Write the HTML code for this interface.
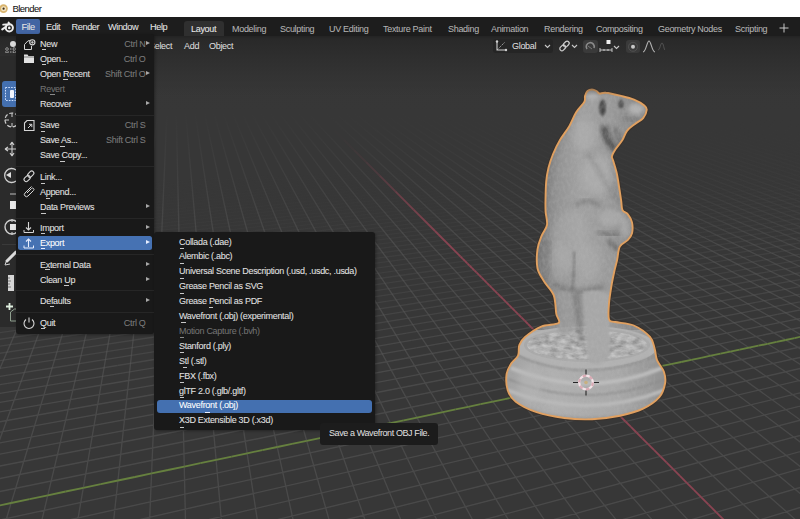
<!DOCTYPE html>
<html><head><meta charset="utf-8"><style>
*{margin:0;padding:0;box-sizing:border-box}
html,body{width:800px;height:519px;overflow:hidden;background:#373737;font-family:"Liberation Sans",sans-serif;position:relative}
.a{position:absolute}
.t{position:absolute;white-space:pre;font-size:9px;letter-spacing:-0.3px;color:#e2e2e2;line-height:14px;height:14px;-webkit-text-stroke:0.06px currentColor}
.menu{position:absolute;background:#191919;border-radius:3px;box-shadow:1px 1px 3px rgba(0,0,0,0.35)}
.sep{position:absolute;height:1px;background:#262626}
.sc{color:#7c7c7c;text-align:right}
.dis{color:#727272}
.arr{position:absolute;width:0;height:0;border-left:4px solid #a8a8a8;border-top:2.5px solid transparent;border-bottom:2.5px solid transparent}
.ul{position:absolute;height:1px;background:#c8c8c8}
svg{position:absolute;left:0;top:0;overflow:visible}
</style></head><body>
<svg width="800" height="519" style="left:0;top:0">
<path d="M15.9 186.4L-85.3 195.1M14.0 189.0L-88.4 197.9M108.1 183.1L-91.6 200.7M164.0 180.5L-94.9 203.5M218.6 178.0L-98.3 206.5M271.9 175.6L-101.7 209.5M823.2 121.7L858.8 130.1M324.0 173.2L4.2 202.5M815.9 122.3L851.3 130.8M374.8 170.8L104.2 195.9M808.6 123.0L882.9 141.0M424.5 168.5L118.7 197.3M769.8 115.9L875.1 141.8M473.1 166.3L170.8 195.0M762.7 116.5L828.4 133.0M520.6 164.1L229.0 192.2M755.4 117.1L820.6 133.7M572.3 161.4L285.7 189.4M720.4 110.6L812.8 134.5M612.5 159.9L341.0 186.6M713.3 111.1L771.1 126.3M680.6 155.4L395.0 184.0M681.4 105.1L763.4 127.0M685.7 157.3L447.6 181.4M674.4 105.6L755.6 127.7M751.2 153.0L504.9 178.2M645.4 100.0L718.2 120.2M813.8 148.9L554.9 175.8M638.5 100.5L710.6 120.8M873.7 145.0L603.7 173.4M631.6 100.9L676.8 113.9M880.2 146.6L640.8 172.1M605.2 95.7L669.3 114.5M886.9 148.3L712.5 167.1M598.4 96.2L638.7 108.2M893.8 150.0L780.7 162.4M574.2 91.3L631.4 108.7M900.7 151.8L787.0 164.4M551.7 86.8L624.0 109.3M545.3 87.2L596.3 103.4M524.6 83.0L589.1 103.9M518.2 83.3L563.8 98.4M499.1 79.4L556.7 98.9M492.9 79.7L533.6 93.8M475.2 76.0L512.3 89.1M458.7 72.5L505.5 89.5M452.8 72.8L485.9 85.1M437.4 69.6L479.3 85.5M423.0 66.5L461.2 81.4M409.4 63.6L444.4 77.6M403.9 63.9L428.6 74.0M391.2 61.1L422.5 74.3M379.3 58.6L407.9 71.0M368.0 56.1L394.2 67.8M357.3 53.8L381.3 64.9M347.1 51.6L369.2 62.1M337.5 49.5L363.6 62.3M332.6 49.7L352.3 59.7M327.7 49.9L341.6 57.2M318.7 47.9L331.5 54.8M313.9 48.1L321.9 52.6M45.3 48.5L41.8 50.7M39.8 48.7L32.2 53.2M34.3 48.8L22.1 55.9M28.8 49.0L16.0 56.1M23.3 49.2L5.0 59.0M17.7 49.4L-6.9 62.1M7.6 51.8L-19.5 65.4M-3.2 54.4L-26.3 65.6M-14.6 57.2L-40.2 69.2M-26.8 60.1L-55.1 73.0M-33.3 60.4L-54.5 69.8M-46.6 63.5L-53.9 66.7" stroke="#595959" stroke-opacity="0.03" stroke-width="1.35" fill="none"/>
<path d="M4.2 202.5L-105.2 212.6M104.2 195.9L-108.9 215.7M118.7 197.3L-112.6 219.0M170.8 195.0L-116.4 222.3M828.4 133.0L867.1 142.6M229.0 192.2L-4.5 214.6M820.6 133.7L859.0 143.5M285.7 189.4L-6.9 217.9M812.8 134.5L850.9 144.3M341.0 186.6L99.8 210.4M771.1 126.3L842.7 145.2M395.0 184.0L123.3 211.1M763.4 127.0L834.4 146.0M447.6 181.4L186.2 207.8M755.6 127.7L826.1 146.9M504.9 178.2L247.4 204.6M718.2 120.2L780.7 137.5M554.9 175.8L307.0 201.5M710.6 120.8L772.5 138.3M603.7 173.4L365.1 198.4M676.8 113.9L764.2 139.1M640.8 172.1L421.6 195.5M669.3 114.5L723.8 130.5M712.5 167.1L476.7 192.6M638.7 108.2L715.7 131.2M780.7 162.4L530.4 189.8M631.4 108.7L679.5 123.4M787.0 164.4L588.7 186.4M624.0 109.3L671.5 124.0M852.5 159.8L639.6 183.7M596.3 103.4L663.5 124.7M859.4 161.7L667.3 183.6M589.1 103.9L631.1 117.5M866.5 163.7L742.3 178.1M563.8 98.4L623.2 118.1M873.7 165.7L813.4 172.8M556.7 98.9L593.9 111.5M881.0 167.8L820.4 175.0M533.6 93.8L586.2 112.0M512.3 89.1L559.6 105.9M505.5 89.5L552.1 106.4M485.9 85.1L527.9 100.8M479.3 85.5L505.7 95.5M461.2 81.4L498.5 96.0M444.4 77.6L478.2 91.1M428.6 74.0L471.2 91.5M422.5 74.3L452.5 87.0M407.9 71.0L435.2 82.8M394.2 67.8L419.0 78.9M381.3 64.9L412.5 79.2M369.2 62.1L397.6 75.6M363.6 62.3L383.7 72.1M352.3 59.7L370.6 68.9M341.6 57.2L358.3 65.9M331.5 54.8L352.4 66.2M321.9 52.6L341.0 63.3M309.1 48.3L330.2 60.6M304.2 48.4L320.1 58.0M299.3 48.6L306.5 53.2M294.4 48.8L297.7 51.0M61.6 48.0L55.3 52.5M56.2 48.2L45.9 55.1M50.8 48.3L36.0 57.9M41.8 50.7L25.4 60.9M32.2 53.2L14.0 64.1M22.1 55.9L7.4 64.4M16.0 56.1L-5.1 67.8M5.0 59.0L-18.5 71.6M-6.9 62.1L-25.7 71.9M-19.5 65.4L-40.5 75.9M-26.3 65.6L-56.5 80.3M-40.2 69.2L-55.8 76.5" stroke="#595959" stroke-opacity="0.06" stroke-width="1.35" fill="none"/>
<path d="M-4.5 214.6L-120.3 225.8M-6.9 217.9L-124.4 229.3M99.8 210.4L-128.5 232.9M842.7 145.2L885.4 156.4M123.3 211.1L-132.8 236.7M834.4 146.0L876.8 157.4M186.2 207.8L-137.1 240.5M826.1 146.9L868.1 158.3M247.4 204.6L-16.8 231.7M780.7 137.5L859.3 159.3M307.0 201.5L95.9 223.4M772.5 138.3L850.5 160.3M365.1 198.4L120.6 224.1M764.2 139.1L800.5 149.5M421.6 195.5L178.7 221.3M723.8 130.5L791.8 150.4M476.7 192.6L243.5 217.8M715.7 131.2L783.0 151.3M530.4 189.8L306.4 214.3M679.5 123.4L738.9 141.5M588.7 186.4L367.6 210.9M671.5 124.0L730.3 142.3M639.6 183.7L427.2 207.6M663.5 124.7L690.9 133.4M667.3 183.6L485.1 204.4M631.1 117.5L682.5 134.2M742.3 178.1L547.9 200.6M623.2 118.1L674.0 134.9M813.4 172.8L602.6 197.6M593.9 111.5L639.0 126.7M820.4 175.0L661.7 193.9M586.2 112.0L630.7 127.4M888.5 169.9L690.8 193.8M559.6 105.9L599.3 119.9M896.2 172.0L768.5 187.7M552.1 106.4L591.2 120.6M904.1 174.2L842.2 182.0M527.9 100.8L562.9 113.7M912.1 176.5L849.8 184.4M505.7 95.5L555.0 114.3M498.5 96.0L529.3 108.0M478.2 91.1L521.6 108.5M471.2 91.5L498.3 102.7M452.5 87.0L476.9 97.3M435.2 82.8L469.6 97.8M419.0 78.9L450.0 92.8M412.5 79.2L432.0 88.2M397.6 75.6L425.0 88.6M383.7 72.1L408.4 84.3M370.6 68.9L393.0 80.3M358.3 65.9L378.6 76.5M352.4 66.2L372.2 76.8M341.0 63.3L358.9 73.3M330.2 60.6L346.4 70.0M320.1 58.0L334.7 66.9M306.5 53.2L323.8 64.0M297.7 51.0L313.4 61.3M289.4 48.9L303.6 58.7M284.4 49.1L294.4 56.3M279.5 49.3L282.4 51.6M80.5 49.4L77.9 51.7M75.0 49.6L69.3 54.3M69.5 49.8L60.2 57.1M64.0 50.0L50.5 60.0M55.3 52.5L40.2 63.2M45.9 55.1L33.7 63.4M36.0 57.9L22.3 66.8M25.4 60.9L10.1 70.4M14.0 64.1L-3.1 74.4M7.4 64.4L-10.5 74.7M-5.1 67.8L-25.1 78.9M-18.5 71.6L-40.9 83.6M-25.7 71.9L-49.0 83.9M-40.5 75.9L-57.2 84.3" stroke="#595959" stroke-opacity="0.08" stroke-width="1.35" fill="none"/>
<path d="M-16.8 231.7L-141.6 244.4M95.9 223.4L-146.3 248.5M120.6 224.1L-151.1 252.7M800.5 149.5L888.3 174.8M178.7 221.3L-25.1 243.0M791.8 150.4L832.5 162.3M243.5 217.8L-28.0 247.1M783.0 151.3L823.3 163.4M306.4 214.3L91.5 237.8M738.9 141.5L814.1 164.4M367.6 210.9L153.1 234.7M730.3 142.3L765.2 153.2M427.2 207.6L213.2 231.7M690.9 133.4L756.1 154.1M485.1 204.4L280.1 227.8M682.5 134.2L747.0 155.1M547.9 200.6L345.0 224.1M674.0 134.9L704.0 144.8M602.6 197.6L408.0 220.4M639.0 126.7L695.0 145.7M661.7 193.9L469.3 216.9M630.7 127.4L656.8 136.4M690.8 193.8L535.6 212.6M599.3 119.9L648.1 137.2M768.5 187.7L593.3 209.3M591.2 120.6L639.3 138.0M842.2 182.0L655.6 205.3M562.9 113.7L605.4 129.5M849.8 184.4L709.9 202.1M555.0 114.3L596.8 130.2M857.6 186.9L789.9 195.6M529.3 108.0L566.5 122.5M865.5 189.4L797.4 198.3M521.6 108.5L558.1 123.1M498.3 102.7L530.8 116.1M476.9 97.3L506.0 109.6M469.6 97.8L498.0 110.1M450.0 92.8L475.5 104.2M432.0 88.2L467.8 104.7M425.0 88.6L447.3 99.2M408.4 84.3L428.5 94.1M393.0 80.3L421.2 94.5M378.6 76.5L403.9 89.8M372.2 76.8L387.9 85.4M358.9 73.3L373.1 81.3M346.4 70.0L359.2 77.5M334.7 66.9L352.7 77.8M323.8 64.0L339.9 74.2M313.4 61.3L328.0 70.9M303.6 58.7L316.8 67.7M294.4 56.3L306.2 64.8M282.4 51.6L296.3 62.0M274.5 49.5L286.9 59.4M269.4 49.7L275.0 54.3M264.4 49.8L266.9 52.1M257.0 47.8L259.3 50.0M96.7 48.9L94.6 51.1M91.3 49.1L86.6 53.7M85.9 49.3L78.1 56.4M77.9 51.7L69.1 59.3M69.3 54.3L59.5 62.4M60.2 57.1L49.1 65.7M50.5 60.0L38.0 69.3M40.2 63.2L31.1 69.6M33.7 63.4L18.8 73.5M22.3 66.8L5.6 77.6M10.1 70.4L-8.7 82.1M-3.1 74.4L-16.7 82.5M-10.5 74.7L-32.6 87.4M-25.1 78.9L-41.1 87.8M-40.9 83.6L-58.9 93.2M-49.0 83.9L-58.0 88.6" stroke="#595959" stroke-opacity="0.11" stroke-width="1.35" fill="none"/>
<path d="M-25.1 243.0L-156.0 257.0M832.5 162.3L878.9 176.0M-28.0 247.1L-161.1 261.4M823.3 163.4L869.3 177.1M91.5 237.8L-166.3 266.0M814.1 164.4L859.7 178.3M153.1 234.7L-34.0 255.5M765.2 153.2L849.9 179.5M213.2 231.7L-37.2 259.9M756.1 154.1L795.3 166.5M280.1 227.8L87.9 249.8M747.0 155.1L785.7 167.6M345.0 224.1L143.0 247.5M704.0 144.8L776.1 168.7M408.0 220.4L214.9 243.1M695.0 145.7L728.4 157.0M469.3 216.9L284.6 238.9M656.8 136.4L719.0 157.9M535.6 212.6L352.2 234.8M648.1 137.2L676.9 147.4M593.3 209.3L417.8 230.8M639.3 138.0L667.7 148.3M655.6 205.3L481.4 227.0M605.4 129.5L658.4 149.2M709.9 202.1L543.2 223.3M596.8 130.2L621.4 139.6M789.9 195.6L609.9 218.8M566.5 122.5L612.3 140.4M797.4 198.3L668.0 215.3M558.1 123.1L579.4 131.7M873.7 192.0L730.5 211.1M530.8 116.1L570.6 132.4M882.0 194.6L812.9 204.0M506.0 109.6L541.1 124.5M890.6 197.4L820.9 207.0M498.0 110.1L532.6 125.1M475.5 104.2L506.1 117.9M467.8 104.7L482.0 111.2M447.3 99.2L474.0 111.8M428.5 94.1L452.2 105.7M421.2 94.5L444.3 106.2M403.9 89.8L424.6 100.6M387.9 85.4L406.4 95.4M373.1 81.3L389.6 90.6M359.2 77.5L382.4 91.0M352.7 77.8L367.1 86.5M339.9 74.2L352.8 82.3M328.0 70.9L339.5 78.5M316.8 67.7L327.1 74.8M306.2 64.8L315.5 71.4M296.3 62.0L304.6 68.3M286.9 59.4L294.4 65.3M275.0 54.3L284.7 62.5M266.9 52.1L275.7 59.8M259.3 50.0L267.1 57.3M247.0 48.2L251.2 52.7M112.7 48.4L111.1 50.6M107.4 48.6L103.7 53.1M102.1 48.7L95.8 55.8M94.6 51.1L87.4 58.7M86.6 53.7L78.5 61.7M78.1 56.4L68.9 65.0M69.1 59.3L58.6 68.5M59.5 62.4L51.8 68.8M49.1 65.7L40.4 72.6M38.0 69.3L28.1 76.7M31.1 69.6L14.9 81.1M18.8 73.5L0.5 85.9M5.6 77.6L-7.7 86.3M-8.7 82.1L-23.9 91.6M-16.7 82.5L-32.5 92.0M-32.6 87.4L-50.7 97.8M-41.1 87.8L-50.1 92.8" stroke="#595959" stroke-opacity="0.14" stroke-width="1.35" fill="none"/>
<path d="M-34.0 255.5L-171.7 270.8M849.9 179.5L902.1 195.8M-37.2 259.9L-177.3 275.6M795.3 166.5L840.1 180.8M87.9 249.8L-183.1 280.7M785.7 167.6L830.1 182.0M143.0 247.5L-43.9 269.1M776.1 168.7L820.0 183.3M214.9 243.1L85.3 258.3M728.4 157.0L766.3 169.8M284.6 238.9L93.8 261.6M719.0 157.9L756.4 170.9M352.2 234.8L170.2 256.8M676.9 147.4L746.5 172.0M417.8 230.8L235.0 253.3M667.7 148.3L699.8 159.9M481.4 227.0L306.9 248.8M658.4 149.2L690.1 160.9M543.2 223.3L376.6 244.4M621.4 139.6L649.0 150.1M609.9 218.8L444.1 240.1M612.3 140.4L639.5 151.0M668.0 215.3L517.0 235.0M579.4 131.7L630.0 151.9M730.5 211.1L580.2 231.1M570.6 132.4L594.0 142.0M812.9 204.0L648.2 226.3M541.1 124.5L584.7 142.8M820.9 207.0L707.5 222.6M532.6 125.1L552.7 133.9M899.3 200.1L752.7 220.7M506.1 117.9L543.6 134.6M908.3 203.0L837.6 213.1M482.0 111.2L515.1 126.5M474.0 111.8L489.3 119.1M452.2 105.7L480.8 119.7M444.3 106.2L457.6 112.9M424.6 100.6L449.3 113.5M406.4 95.4L428.3 107.2M389.6 90.6L409.1 101.5M382.4 91.0L401.3 102.0M367.1 86.5L383.9 96.7M352.8 82.3L367.8 91.8M339.5 78.5L352.9 87.3M327.1 74.8L339.1 83.0M315.5 71.4L332.1 83.4M304.6 68.3L319.4 79.5M294.4 65.3L307.6 75.8M284.7 62.5L296.5 72.3M275.7 59.8L286.1 69.1M267.1 57.3L276.4 66.1M251.2 52.7L256.0 57.7M242.0 48.4L248.1 55.3M237.0 48.5L240.6 53.1M231.9 48.7L233.6 50.9M123.3 48.0L120.5 52.5M118.0 48.2L113.2 55.2M111.1 50.6L105.4 58.0M103.7 53.1L99.5 58.2M95.8 55.8L90.9 61.2M87.4 58.7L81.9 64.5M78.5 61.7L72.1 68.0M68.9 65.0L61.6 71.7M58.6 68.5L50.3 75.7M51.8 68.8L38.0 80.1M40.4 72.6L30.4 80.4M28.1 76.7L16.7 85.2M14.9 81.1L1.8 90.3M0.5 85.9L-6.7 90.7M-7.7 86.3L-23.4 96.4M-23.9 91.6L-41.8 102.7M-32.5 92.0L-51.3 103.2" stroke="#595959" stroke-opacity="0.17" stroke-width="1.35" fill="none"/>
<path d="M840.1 180.8L891.8 197.2M830.1 182.0L881.4 198.6M-43.9 269.1L-189.0 285.9M820.0 183.3L870.8 200.1M85.3 258.3L-195.2 291.3M766.3 169.8L809.8 184.5M93.8 261.6L-51.0 278.9M756.4 170.9L799.4 185.8M170.2 256.8L-54.7 284.1M746.5 172.0L789.0 187.1M235.0 253.3L81.1 272.2M699.8 159.9L736.4 173.2M306.9 248.8L140.7 269.5M690.1 160.9L726.2 174.3M376.6 244.4L208.7 265.7M649.0 150.1L715.8 175.5M444.1 240.1L284.2 260.8M639.5 151.0L670.3 163.0M517.0 235.0L357.1 256.0M630.0 151.9L660.2 164.0M580.2 231.1L427.8 251.4M594.0 142.0L620.3 152.8M648.2 226.3L496.2 246.9M584.7 142.8L610.5 153.7M707.5 222.6L569.9 241.6M552.7 133.9L575.3 143.7M752.7 220.7L633.7 237.4M543.6 134.6L565.8 144.5M837.6 213.1L702.4 232.4M515.1 126.5L534.5 135.4M917.5 205.9L768.5 227.6M489.3 119.1L525.3 136.1M480.8 119.7L497.4 127.8M457.6 112.9L488.4 128.5M449.3 113.5L463.6 121.0M428.3 107.2L454.8 121.6M409.1 101.5L432.5 114.6M401.3 102.0L412.1 108.3M383.9 96.7L404.0 108.8M367.8 91.8L385.6 103.0M352.9 87.3L368.6 97.6M339.1 83.0L353.0 92.6M332.1 83.4L338.6 88.0M319.4 79.5L331.3 88.4M307.6 75.8L318.1 84.1M296.5 72.3L305.8 80.1M286.1 69.1L294.4 76.4M276.4 66.1L283.7 72.9M256.0 57.7L264.2 66.6M248.1 55.3L255.3 63.7M240.6 53.1L247.0 61.0M233.6 50.9L237.1 55.8M226.9 48.9L229.9 53.5M221.8 49.1L223.1 51.3M132.7 49.9L131.5 52.2M128.5 47.9L124.6 54.8M120.5 52.5L117.3 57.6M113.2 55.2L109.5 60.6M105.4 58.0L101.1 63.7M99.5 58.2L92.1 67.2M90.9 61.2L82.4 70.8M81.9 64.5L72.0 74.8M72.1 68.0L64.8 75.1M61.6 71.7L53.2 79.4M50.3 75.7L40.7 84.1M38.0 80.1L27.0 89.1M30.4 80.4L18.7 89.5M16.7 85.2L3.3 95.1M1.8 90.3L-13.6 101.2M-6.7 90.7L-22.9 101.7M-23.4 96.4L-42.0 108.5M-41.8 102.7L-52.0 109.1" stroke="#595959" stroke-opacity="0.19" stroke-width="1.35" fill="none"/>
<path d="M809.8 184.5L860.1 201.6M799.4 185.8L849.3 203.1M789.0 187.1L838.3 204.6M81.1 272.2L-58.6 289.4M736.4 173.2L778.4 188.4M140.7 269.5L-62.5 294.9M726.2 174.3L767.7 189.7M208.7 265.7L78.1 282.3M715.8 175.5L756.8 191.1M284.2 260.8L118.9 282.1M670.3 163.0L705.4 176.7M357.1 256.0L200.0 276.6M660.2 164.0L694.8 177.9M427.8 251.4L278.3 271.3M620.3 152.8L650.1 165.1M496.2 246.9L354.0 266.2M610.5 153.7L639.8 166.1M569.9 241.6L427.1 261.2M575.3 143.7L600.6 154.7M633.7 237.4L497.9 256.4M565.8 144.5L590.7 155.6M702.4 232.4L566.4 251.8M534.5 135.4L580.6 156.6M768.5 227.6L639.9 246.3M525.3 136.1L546.5 146.2M855.2 219.6L710.7 240.9M497.4 127.8L536.7 147.1M864.3 222.9L778.8 235.8M488.4 128.5L506.5 137.7M463.6 121.0L479.4 129.2M454.8 121.6L470.3 129.9M432.5 114.6L446.0 122.2M412.1 108.3L437.2 122.9M404.0 108.8L415.5 115.8M385.6 103.0L395.7 109.4M368.6 97.6L387.4 109.9M353.0 92.6L369.5 104.0M338.6 88.0L353.1 98.5M331.3 88.4L338.0 93.5M318.1 84.1L324.0 88.8M305.8 80.1L316.7 89.2M294.4 76.4L304.0 84.9M283.7 72.9L292.1 80.8M264.2 66.6L270.7 73.5M255.3 63.7L261.0 70.2M247.0 61.0L251.9 67.1M237.1 55.8L243.4 64.2M229.9 53.5L235.3 61.4M223.1 51.3L227.7 58.8M216.6 49.2L220.5 56.4M211.5 49.4L213.7 54.1M206.3 49.6L207.3 51.9M153.9 49.2L153.4 51.4M148.7 49.3L148.0 51.6M143.4 49.5L141.6 54.2M138.0 49.7L134.9 56.9M131.5 52.2L127.7 59.9M124.6 54.8L121.7 60.1M117.3 57.6L113.7 63.2M109.5 60.6L105.2 66.6M101.1 63.7L96.1 70.3M92.1 67.2L86.3 74.2M82.4 70.8L75.7 78.4M72.0 74.8L68.2 78.7M64.8 75.1L56.4 83.3M53.2 79.4L43.5 88.4M40.7 84.1L29.4 93.8M27.0 89.1L20.8 94.3M18.7 89.5L4.9 100.3M3.3 95.1L-12.6 107.0M-13.6 101.2L-22.3 107.5M-22.9 101.7L-42.3 114.9M-42.0 108.5L-52.7 115.5" stroke="#595959" stroke-opacity="0.22" stroke-width="1.35" fill="none"/>
<path d="M849.3 203.1L853.5 204.5M838.3 204.6L851.0 209.0M778.4 188.4L835.5 209.1M767.7 189.7L815.9 207.6M78.1 282.3L-66.7 300.6M118.9 282.1L-70.9 306.5M705.4 176.7L745.8 192.4M200.0 276.6L74.8 293.0M694.8 177.9L734.7 193.8M278.3 271.3L127.8 291.3M650.1 165.1L684.2 179.1M354.0 266.2L200.9 286.9M639.8 166.1L673.4 180.3M427.1 261.2L281.8 281.2M600.6 154.7L629.5 167.2M497.9 256.4L359.9 275.8M590.7 155.6L619.0 168.3M566.4 251.8L435.2 270.5M580.6 156.6L608.4 169.4M639.9 246.3L508.1 265.4M546.5 146.2L570.4 157.6M710.7 240.9L586.3 259.3M536.7 147.1L560.1 158.5M778.8 235.8L654.0 254.6M506.5 137.7L526.8 147.9M873.7 226.4L726.6 249.0M479.4 129.2L516.9 148.8M883.4 229.9L796.3 243.5M470.3 129.9L487.5 139.3M446.0 122.2L461.0 130.7M437.2 122.9L451.8 131.4M415.5 115.8L428.2 123.5M395.7 109.4L419.2 124.2M387.4 109.9L398.2 117.0M369.5 104.0L379.0 110.5M353.1 98.5L361.4 104.5M338.0 93.5L353.3 105.0M324.0 88.8L337.4 99.4M316.7 89.2L322.8 94.3M304.0 84.9L309.3 89.6M292.1 80.8L296.8 85.2M270.7 73.5L278.2 81.5M261.0 70.2L267.5 77.7M251.9 67.1L257.6 74.1M243.4 64.2L248.2 70.8M235.3 61.4L239.5 67.6M227.7 58.8L231.3 64.7M220.5 56.4L223.5 61.9M213.7 54.1L216.2 59.3M207.3 51.9L209.3 56.8M201.1 49.8L202.8 54.5M195.9 49.9L197.3 54.7M190.2 47.9L191.2 52.4M185.1 48.1L185.8 52.6M180.0 48.3L180.4 52.8M174.8 48.5L174.9 53.0M169.6 48.6L169.4 53.2M164.4 48.8L163.9 53.4M159.2 49.0L158.4 53.6M153.4 51.4L152.2 56.3M148.0 51.6L146.5 56.5M141.6 54.2L139.7 59.4M134.9 56.9L132.5 62.5M127.7 59.9L124.7 65.8M121.7 60.1L118.3 66.1M113.7 63.2L109.7 69.7M105.2 66.6L100.4 73.6M96.1 70.3L90.4 77.7M86.3 74.2L79.6 82.3M75.7 78.4L71.9 82.6M68.2 78.7L59.8 87.6M56.4 83.3L46.6 93.0M43.5 88.4L38.0 93.4M29.4 93.8L23.1 99.4M20.8 94.3L6.6 105.9M4.9 100.3L-3.0 106.4M-12.6 107.0L-21.8 113.7M-22.3 107.5L-32.0 114.3M-42.3 114.9L-53.6 122.5" stroke="#595959" stroke-opacity="0.25" stroke-width="1.35" fill="none"/>
<path d="M835.5 209.1L852.7 215.3M815.9 207.6L845.6 218.7M756.8 191.1L812.6 212.3M745.8 192.4L792.9 210.8M74.8 293.0L-75.4 312.6M127.8 291.3L-79.9 319.0M684.2 179.1L723.5 195.2M200.9 286.9L71.3 304.4M673.4 180.3L712.1 196.6M281.8 281.2L137.3 301.2M629.5 167.2L662.4 181.5M359.9 275.8L222.9 295.0M619.0 168.3L651.4 182.8M435.2 270.5L305.4 289.0M508.1 265.4L384.9 283.3M570.4 157.6L597.6 170.5M586.3 259.3L461.7 277.8M560.1 158.5L586.8 171.6M654.0 254.6L535.8 272.5M526.8 147.9L549.7 159.5M726.6 249.0L615.3 266.1M516.9 148.8L539.2 160.5M796.3 243.5L691.5 260.0M487.5 139.3L506.8 149.7M893.3 233.5L757.6 255.2M461.0 130.7L477.8 140.1M903.5 237.3L821.6 250.6M451.8 131.4L468.0 140.9M428.2 123.5L442.4 132.1M419.2 124.2L432.9 132.8M398.2 117.0L410.1 124.9M379.0 110.5L389.4 117.6M361.4 104.5L380.6 118.2M353.3 105.0L362.0 111.6M337.4 99.4L345.1 105.5M322.8 94.3L329.5 99.9M309.3 89.6L321.5 100.4M296.8 85.2L307.4 95.2M278.2 81.5L282.4 86.0M267.5 77.7L271.1 81.8M257.6 74.1L260.7 78.0M248.2 70.8L250.9 74.4M239.5 67.6L241.8 71.0M231.3 64.7L235.3 71.3M223.5 61.9L226.9 68.2M216.2 59.3L219.0 65.2M209.3 56.8L211.6 62.4M202.8 54.5L204.6 59.7M197.3 54.7L198.8 60.0M191.2 52.4L192.3 57.4M185.8 52.6L186.6 57.7M180.4 52.8L180.8 57.9M174.9 53.0L175.0 58.1M169.4 53.2L169.2 58.3M163.9 53.4L163.4 58.5M158.4 53.6L157.5 58.7M152.2 56.3L150.9 61.8M146.5 56.5L144.8 62.0M139.7 59.4L137.5 65.3M132.5 62.5L129.7 68.9M124.7 65.8L123.1 69.1M118.3 66.1L114.4 73.0M109.7 69.7L105.0 77.1M100.4 73.6L94.9 81.6M90.4 77.7L87.3 81.9M79.6 82.3L75.9 86.8M71.9 82.6L63.5 92.1M59.8 87.6L49.9 98.0M46.6 93.0L41.0 98.4M38.0 93.4L25.6 104.9M23.1 99.4L16.1 105.4M6.6 105.9L-1.5 112.6M-3.0 106.4L-21.1 120.6M-21.8 113.7L-31.8 121.2M-32.0 114.3L-54.5 130.2" stroke="#595959" stroke-opacity="0.28" stroke-width="1.35" fill="none"/>
<path d="M845.6 218.7L850.0 220.3M812.6 212.3L851.9 227.2M792.9 210.8L821.9 222.1M734.7 193.8L789.1 215.6M723.5 195.2L769.3 214.1M71.3 304.4L-84.7 325.6M137.3 301.2L69.5 310.5M662.4 181.5L700.5 198.1M222.9 295.0L91.0 313.5M651.4 182.8L688.9 199.5M305.4 289.0L169.6 308.4M608.4 169.4L640.2 184.0M384.9 283.3L256.5 302.0M597.6 170.5L628.9 185.3M461.7 277.8L340.1 295.8M535.8 272.5L420.7 289.8M549.7 159.5L575.8 172.7M615.3 266.1L498.3 284.1M691.5 260.0L581.6 277.2M506.8 149.7L528.6 161.5M757.6 255.2L653.5 271.9M477.8 140.1L496.6 150.6M821.6 250.6L730.4 265.5M468.0 140.9L486.3 151.5M914.0 241.1L804.1 259.4M442.4 132.1L458.2 141.7M924.8 245.1L841.5 259.3M432.9 132.8L448.2 142.5M410.1 124.9L423.4 133.6M389.4 117.6L400.9 125.5M380.6 118.2L391.7 126.2M362.0 111.6L371.7 118.8M345.1 105.5L353.4 112.1M329.5 99.9L344.8 112.7M321.5 100.4L328.4 106.5M307.4 95.2L313.4 100.9M282.4 86.0L286.9 90.8M271.1 81.8L279.3 91.2M260.7 78.0L267.7 86.7M250.9 74.4L257.0 82.5M241.8 71.0L246.9 78.7M235.3 71.3L237.6 75.0M226.9 68.2L228.8 71.6M219.0 65.2L222.3 71.9M211.6 62.4L214.2 68.7M204.6 59.7L206.7 65.7M198.8 60.0L200.5 66.0M192.3 57.4L193.5 63.1M186.6 57.7L187.4 63.3M180.8 57.9L181.3 63.6M175.0 58.1L175.2 63.8M169.2 58.3L169.0 64.1M163.4 58.5L162.7 64.3M157.5 58.7L156.5 64.6M150.9 61.8L149.4 68.1M144.8 62.0L142.9 68.3M137.5 65.3L135.0 72.1M129.7 68.9L128.2 72.4M123.1 69.1L119.4 76.5M114.4 73.0L109.9 80.9M105.0 77.1L102.4 81.2M94.9 81.6L91.8 86.1M87.3 81.9L80.1 91.3M75.9 86.8L67.4 97.1M63.5 92.1L58.7 97.5M49.9 98.0L44.2 103.9M41.0 98.4L34.9 104.4M25.6 104.9L18.4 111.5M16.1 105.4L0.1 119.3M-1.5 112.6L-10.5 120.0M-21.1 120.6L-31.7 128.8M-31.8 121.2L-43.0 129.5" stroke="#595959" stroke-opacity="0.30" stroke-width="1.35" fill="none"/>
<path d="M821.9 222.1L853.8 234.5M789.1 215.6L823.0 229.1M769.3 214.1L793.4 224.0M712.1 196.6L761.1 217.3M69.5 310.5L-89.7 332.4M700.5 198.1L745.1 217.4M91.0 313.5L-94.8 339.5M169.6 308.4L65.6 323.3M640.2 184.0L677.0 201.0M256.5 302.0L135.3 319.6M628.9 185.3L665.1 202.5M340.1 295.8L214.6 314.4M586.8 171.6L617.4 186.6M420.7 289.8L302.1 307.7M575.8 172.7L605.8 187.9M498.3 284.1L386.2 301.3M539.2 160.5L564.8 173.9M581.6 277.2L467.2 295.1M528.6 161.5L553.5 175.0M653.5 271.9L545.3 289.2M496.6 150.6L517.9 162.6M730.4 265.5L628.9 282.1M486.3 151.5L507.1 163.6M804.1 259.4L708.8 275.3M458.2 141.7L476.0 152.4M841.5 259.3L778.1 270.1M448.2 142.5L465.5 153.4M423.4 133.6L438.2 143.3M400.9 125.5L413.7 134.3M391.7 126.2L404.0 135.1M371.7 118.8L382.3 126.9M353.4 112.1L362.7 119.5M344.8 112.7L353.6 120.1M328.4 106.5L336.1 113.3M313.4 100.9L320.0 107.0M286.9 90.8L297.2 101.8M279.3 91.2L283.9 96.5M267.7 86.7L271.7 91.6M257.0 82.5L260.3 87.1M246.9 78.7L249.8 82.9M237.6 75.0L242.6 83.3M228.8 71.6L233.0 79.3M222.3 71.9L224.1 75.6M214.2 68.7L215.7 72.2M206.7 65.7L209.1 72.5M200.5 66.0L201.4 69.3M193.5 63.1L194.9 69.5M187.4 63.3L188.4 69.8M181.3 63.6L181.6 66.7M175.2 63.8L175.2 67.0M169.0 64.1L168.8 67.3M162.7 64.3L162.0 70.9M156.5 64.6L155.3 71.2M149.4 68.1L148.6 71.5M142.9 68.3L140.7 75.5M135.0 72.1L133.7 75.8M128.2 72.4L124.8 80.2M119.4 76.5L117.4 80.5M109.9 80.9L107.4 85.3M102.4 81.2L96.6 90.5M91.8 86.1L88.4 90.9M80.1 91.3L76.1 96.6M67.4 97.1L62.6 102.9M58.7 97.5L53.5 103.4M44.2 103.9L38.0 110.4M34.9 104.4L20.9 118.1M18.4 111.5L10.6 118.7M0.1 119.3L-9.2 127.4M-10.5 120.0L-20.4 128.1M-31.7 128.8L-43.4 138.0M-43.0 129.5L-55.5 138.8" stroke="#595959" stroke-opacity="0.33" stroke-width="1.35" fill="none"/>
<path d="M823.0 229.1L850.9 240.3M793.4 224.0L824.1 236.6M761.1 217.3L793.7 231.1M745.1 217.4L760.5 224.1M688.9 199.5L732.7 219.1M65.6 323.3L-100.1 346.9M677.0 201.0L720.2 220.8M135.3 319.6L63.6 330.0M214.6 314.4L98.6 331.5M617.4 186.6L652.9 204.0M302.1 307.7L181.1 325.9M386.2 301.3L272.1 318.8M564.8 173.9L594.1 189.2M467.2 295.1L359.6 312.0M545.3 289.2L443.7 305.4M517.9 162.6L542.2 176.2M628.9 282.1L524.6 299.1M708.8 275.3L611.2 291.6M476.0 152.4L496.1 164.6M778.1 270.1L685.8 285.8M851.9 263.8L765.4 278.8M438.2 143.3L454.9 154.3M855.7 269.7L841.6 272.2M413.7 134.3L428.1 144.2M404.0 135.1L417.8 145.0M382.3 126.9L394.2 135.8M362.7 119.5L372.9 127.6M353.6 120.1L363.4 128.3M336.1 113.3L344.5 120.7M320.0 107.0L327.3 113.8M297.2 101.8L303.0 108.1M283.9 96.5L288.9 102.3M271.7 91.6L276.0 97.0M260.3 87.1L264.0 92.0M249.8 82.9L256.2 92.5M242.6 83.3L245.4 87.9M233.0 79.3L235.3 83.6M224.1 75.6L226.0 79.7M215.7 72.2L218.9 80.0M209.1 72.5L210.4 76.3M201.4 69.3L203.5 76.6M194.9 69.5L195.7 73.1M188.4 69.8L189.0 73.4M181.6 66.7L182.2 73.7M175.2 67.0L175.4 74.0M168.8 67.3L168.5 74.3M162.0 70.9L161.6 74.6M155.3 71.2L154.7 74.9M148.6 71.5L146.8 79.2M140.7 75.5L139.5 79.5M133.7 75.8L130.6 84.2M124.8 80.2L122.9 84.6M117.4 80.5L112.8 89.7M107.4 85.3L104.7 90.1M96.6 90.5L93.3 95.7M88.4 90.9L80.8 101.9M76.1 96.6L71.7 102.4M62.6 102.9L57.4 109.3M53.5 103.4L47.7 109.8M38.0 110.4L31.2 117.5M20.9 118.1L12.8 126.1M10.6 118.7L1.8 126.8M-9.2 127.4L-19.6 136.5M-20.4 128.1L-31.5 137.2M-43.4 138.0L-56.6 148.3" stroke="#595959" stroke-opacity="0.36" stroke-width="1.35" fill="none"/>
<path d="M824.1 236.6L852.9 248.4M793.7 231.1L825.3 244.4M760.5 224.1L789.6 236.7M732.7 219.1L759.8 231.2M720.2 220.8L727.6 224.2M63.6 330.0L-105.7 354.6M665.1 202.5L707.5 222.6M98.6 331.5L-111.5 362.6M181.1 325.9L72.0 342.4M605.8 187.9L640.6 205.5M272.1 318.8L157.4 336.5M594.1 189.2L628.2 207.0M359.6 312.0L251.5 328.9M553.5 175.0L582.2 190.6M443.7 305.4L341.9 321.7M542.2 176.2L570.2 191.9M524.6 299.1L428.6 314.8M507.1 163.6L530.7 177.4M611.2 291.6L512.1 308.1M496.1 164.6L519.1 178.6M685.8 285.8L592.4 301.7M465.5 153.4L485.0 165.7M765.4 278.8L678.0 294.0M454.9 154.3L473.9 166.8M841.6 272.2L759.8 286.7M428.1 144.2L444.2 155.3M852.5 277.1L838.1 279.7M417.8 145.0L433.4 156.2M394.2 135.8L407.5 145.9M372.9 127.6L384.3 136.6M363.4 128.3L374.3 137.4M344.5 120.7L353.8 129.0M327.3 113.8L335.3 121.3M303.0 108.1L309.5 115.0M288.9 102.3L294.4 108.6M276.0 97.0L280.6 102.8M264.0 92.0L272.3 103.3M256.2 92.5L259.9 97.9M245.4 87.9L248.5 92.9M235.3 83.6L237.9 88.3M226.0 79.7L230.3 88.7M218.9 80.0L220.7 84.3M210.4 76.3L213.3 84.7M203.5 76.6L204.6 80.7M195.7 73.1L197.4 81.0M189.0 73.4L189.6 77.2M182.2 73.7L182.5 77.5M175.4 74.0L175.5 77.9M168.5 74.3L168.4 78.2M161.6 74.6L161.2 78.5M154.7 74.9L153.3 83.1M146.8 79.2L145.8 83.5M139.5 79.5L138.2 83.8M130.6 84.2L128.8 88.9M122.9 84.6L120.9 89.3M112.8 89.7L110.3 94.9M104.7 90.1L98.6 101.0M93.3 95.7L89.7 101.4M80.8 101.9L76.4 108.2M71.7 102.4L66.9 108.7M57.4 109.3L51.6 116.3M47.7 109.8L41.4 116.9M31.2 117.5L23.7 125.4M1.8 126.8L-7.9 135.7M-31.5 137.2L-43.9 147.4" stroke="#595959" stroke-opacity="0.39" stroke-width="1.35" fill="none"/>
<path d="M825.3 244.4L855.0 257.0M789.6 236.7L821.6 250.6M759.8 231.2L785.3 242.6M727.6 224.2L755.0 236.9M707.5 222.6L722.2 229.6M652.9 204.0L694.6 224.4M72.0 342.4L-117.5 371.0M640.6 205.5L681.5 226.2M157.4 336.5L56.9 351.9M251.5 328.9L144.7 345.7M582.2 190.6L615.5 208.6M341.9 321.7L229.7 339.6M428.6 314.8L323.1 332.0M530.7 177.4L558.0 193.3M512.1 308.1L412.8 324.6M592.4 301.7L498.9 317.6M485.0 165.7L507.4 179.8M678.0 294.0L590.8 309.2M759.8 286.7L669.8 302.7M444.2 155.3L462.5 167.9M838.1 279.7L753.9 295.0M856.5 283.6L834.3 287.7M407.5 145.9L422.5 157.2M384.3 136.6L397.0 146.7M353.8 129.0L364.2 138.2M335.3 121.3L344.1 129.7M309.5 115.0L316.6 122.6M294.4 108.6L300.5 115.6M280.6 102.8L285.8 109.2M272.3 103.3L277.0 109.7M259.9 97.9L263.9 103.8M248.5 92.9L251.8 98.3M237.9 88.3L243.6 98.8M230.3 88.7L232.7 93.7M220.7 84.3L222.7 89.1M213.3 84.7L215.0 89.5M204.6 80.7L205.9 85.1M197.4 81.0L198.4 85.5M189.6 77.2L190.9 85.8M182.5 77.5L182.9 81.7M175.5 77.9L175.6 82.1M168.4 78.2L168.2 82.4M161.2 78.5L160.3 87.3M153.3 83.1L152.5 87.7M145.8 83.5L144.7 88.1M138.2 83.8L135.2 93.6M128.8 88.9L127.0 94.0M120.9 89.3L118.6 94.4M110.3 94.9L107.4 100.5M98.6 101.0L95.1 107.2M89.7 101.4L85.8 107.7M76.4 108.2L71.6 115.1M66.9 108.7L61.6 115.7M51.6 116.3L45.2 124.1M41.4 116.9L34.5 124.7M23.7 125.4L15.3 134.2M12.8 126.1L3.8 134.9M-7.9 135.7L-18.7 145.7M-19.6 136.5L-31.2 146.6M-43.9 147.4L-57.9 159.0" stroke="#595959" stroke-opacity="0.41" stroke-width="1.35" fill="none"/>
<path d="M821.6 250.6L851.9 263.8M785.3 242.6L813.0 255.0M755.0 236.9L780.8 248.7M722.2 229.6L745.8 240.8M694.6 224.4L716.6 235.1M681.5 226.2L685.0 227.9M56.9 351.9L-123.8 379.7M628.2 207.0L668.2 228.0M144.7 345.7L54.6 359.8M229.7 339.6L131.4 355.3M570.2 191.9L602.8 210.2M323.1 332.0L218.8 349.0M412.8 324.6L314.7 340.9M519.1 178.6L545.7 194.7M498.9 317.6L406.7 333.2M590.8 309.2L495.0 325.8M473.9 166.8L495.5 181.0M669.8 302.7L589.1 317.1M753.9 295.0L669.9 310.3M433.4 156.2L451.1 168.9M834.3 287.7L756.0 302.3M853.1 291.7L838.0 294.6M397.0 146.7L411.5 158.2M374.3 137.4L386.5 147.6M364.2 138.2L375.9 148.5M344.1 129.7L354.0 138.9M316.6 122.6L324.5 131.1M300.5 115.6L307.2 123.3M285.8 109.2L291.4 116.2M277.0 109.7L282.3 116.8M263.9 103.8L268.2 110.3M251.8 98.3L255.4 104.3M243.6 98.8L246.9 104.8M232.7 93.7L235.4 99.3M222.7 89.1L224.8 94.2M215.0 89.5L216.8 94.6M205.9 85.1L207.2 89.8M198.4 85.5L199.5 90.3M190.9 85.8L191.6 90.7M182.9 81.7L183.7 91.1M175.6 82.1L175.7 86.6M168.2 82.4L167.8 91.9M160.3 87.3L159.7 92.3M152.5 87.7L151.6 92.7M144.7 88.1L143.5 93.1M135.2 93.6L133.6 99.1M127.0 94.0L124.9 99.5M118.6 94.4L116.2 100.0M107.4 100.5L104.4 106.6M95.1 107.2L91.3 114.0M85.8 107.7L81.5 114.5M71.6 115.1L66.3 122.8M61.6 115.7L55.8 123.4M45.2 124.1L38.1 132.7M34.5 124.7L26.7 133.4M15.3 134.2L5.9 144.0M3.8 134.9L-6.3 144.9M-18.7 145.7L-31.0 157.0M-31.2 146.6L-44.3 158.0" stroke="#595959" stroke-opacity="0.44" stroke-width="1.35" fill="none"/>
<path d="M813.0 255.0L843.4 268.5M780.8 248.7L809.0 261.7M745.8 240.8L771.6 253.0M716.6 235.1L740.5 246.8M685.0 227.9L706.9 239.0M668.2 228.0L675.1 231.6M54.6 359.8L-130.4 388.8M615.5 208.6L654.8 229.8M131.4 355.3L52.1 368.0M218.8 349.0L117.4 365.5M558.0 193.3L589.8 211.8M314.7 340.9L219.7 356.8M406.7 333.2L317.6 348.4M507.4 179.8L533.2 196.1M495.0 325.8L411.3 340.4M495.5 181.0L520.6 197.5M589.1 317.1L501.1 332.7M462.5 167.9L483.5 182.3M669.9 310.3L587.3 325.3M451.1 168.9L471.4 183.5M756.0 302.3L679.1 316.6M422.5 157.2L439.5 170.0M838.0 294.6L766.4 308.2M857.3 298.8L849.6 300.3M386.5 147.6L400.3 159.1M354.0 138.9L365.1 149.4M307.2 123.3L314.6 131.8M291.4 116.2L297.6 123.9M268.2 110.3L273.0 117.4M255.4 104.3L259.4 110.8M235.4 99.3L238.3 105.3M224.8 94.2L227.1 99.7M216.8 94.6L218.7 100.2M207.2 89.8L208.7 95.0M199.5 90.3L200.6 95.5M191.6 90.7L192.4 95.9M183.7 91.1L184.2 96.3M175.7 86.6L175.9 96.8M167.8 91.9L167.6 97.2M159.7 92.3L159.1 97.7M151.6 92.7L150.7 98.2M143.5 93.1L142.2 98.6M133.6 99.1L131.8 105.1M124.9 99.5L122.7 105.6M116.2 100.0L113.6 106.1M104.4 106.6L101.0 113.4M81.5 114.5L76.7 122.1M55.8 123.4L49.3 132.0M26.7 133.4L18.1 143.2M-6.3 144.9L-17.7 156.0M-44.3 158.0L-59.3 171.0" stroke="#595959" stroke-opacity="0.47" stroke-width="1.35" fill="none"/>
<path d="M843.4 268.5L854.1 273.4M809.0 261.7L834.5 273.5M771.6 253.0L799.8 266.4M740.5 246.8L762.1 257.4M706.9 239.0L730.7 251.1M675.1 231.6L696.9 243.0M654.8 229.8L665.0 235.4M52.1 368.0L-137.3 398.3M602.8 210.2L641.1 231.7M117.4 365.5L49.5 376.6M219.7 356.8L129.7 371.8M545.7 194.7L576.7 213.4M317.6 348.4L220.7 364.9M533.2 196.1L563.4 215.1M411.3 340.4L320.5 356.2M501.1 332.7L416.1 347.8M483.5 182.3L507.8 198.9M587.3 325.3L507.6 339.8M679.1 316.6L605.0 330.3M439.5 170.0L459.1 184.8M766.4 308.2L688.5 323.0M411.5 158.2L427.8 171.2M849.6 300.3L777.2 314.4M375.9 148.5L389.0 160.1M324.5 131.1L333.4 140.5M297.6 123.9L304.6 132.5M282.3 116.8L288.0 124.6M273.0 117.4L278.4 125.3M259.4 110.8L263.7 118.0M246.9 104.8L250.4 111.4M238.3 105.3L241.4 111.9M227.1 99.7L229.6 105.8M218.7 100.2L220.8 106.3M208.7 95.0L210.3 100.7M200.6 95.5L201.8 101.1M192.4 95.9L193.3 101.6M184.2 96.3L184.7 102.1M159.1 97.7L158.5 103.6M150.7 98.2L149.7 104.1M142.2 98.6L140.7 104.6M122.7 105.6L120.2 112.3M113.6 106.1L110.7 112.8M101.0 113.4L97.3 120.8M91.3 114.0L87.0 121.5M76.7 122.1L71.4 130.5M66.3 122.8L60.4 131.2M49.3 132.0L42.0 141.5M38.1 132.7L30.1 142.4M18.1 143.2L8.3 154.1M5.9 144.0L-4.6 155.1M-31.0 157.0L-44.9 169.8" stroke="#595959" stroke-opacity="0.50" stroke-width="1.35" fill="none"/>
<path d="M834.5 273.5L850.8 281.0M799.8 266.4L820.1 276.0M762.1 257.4L785.4 268.8M730.7 251.1L752.3 262.0M696.9 243.0L716.5 253.3M665.0 235.4L682.9 245.1M641.1 231.7L651.1 237.3M49.5 376.6L-144.5 408.3M589.8 211.8L627.3 233.6M129.7 371.8L46.7 385.6M576.7 213.4L613.3 235.6M220.7 364.9L128.7 380.5M320.5 356.2L234.5 371.1M520.6 197.5L549.9 216.7M416.1 347.8L335.6 362.1M507.6 339.8L432.2 353.5M471.4 183.5L494.9 200.4M605.0 330.3L524.7 345.3M688.5 323.0L613.4 337.4M427.8 171.2L446.7 186.1M777.2 314.4L707.4 328.0M400.3 159.1L416.0 172.3M853.8 307.7L796.9 319.1M389.0 160.1L404.1 173.4M365.1 149.4L377.7 161.1M333.4 140.5L343.3 151.2M314.6 131.8L322.9 141.4M304.6 132.5L312.3 142.2M288.0 124.6L294.5 133.3M263.7 118.0L268.6 125.9M250.4 111.4L254.4 118.6M241.4 111.9L244.9 119.2M229.6 105.8L232.3 112.5M220.8 106.3L223.2 113.0M210.3 100.7L212.1 106.8M201.8 101.1L203.2 107.4M193.3 101.6L194.2 107.9M175.9 96.8L176.0 102.6M167.6 97.2L167.3 103.1M158.5 103.6L157.8 110.0M149.7 104.1L148.5 110.6M140.7 104.6L139.2 111.1M131.8 105.1L129.8 111.7M120.2 112.3L117.5 119.6M110.7 112.8L107.5 120.2M97.3 120.8L93.2 129.1M87.0 121.5L82.3 129.8M71.4 130.5L65.5 139.9M60.4 131.2L53.8 140.7M30.1 142.4L21.2 153.2M-4.6 155.1L-16.6 167.7M-17.7 156.0L-30.7 168.7M-44.9 169.8L-60.9 184.6" stroke="#595959" stroke-opacity="0.52" stroke-width="1.35" fill="none"/>
<path d="M820.1 276.0L853.1 291.7M785.4 268.8L855.6 303.2M752.3 262.0L852.0 312.4M716.5 253.3L854.6 325.5M682.9 245.1L850.8 336.0M651.1 237.3L853.5 350.9M627.3 233.6L856.4 367.1M46.7 385.6L-152.0 418.7M613.3 235.6L852.2 380.2M128.7 380.5L-159.9 429.6M563.4 215.1L855.3 399.1M234.5 371.1L-168.2 441.1M549.9 216.7L850.6 414.5M335.6 362.1L-176.9 453.2M507.8 198.9L854.0 436.7M432.2 353.5L-186.1 465.9M494.9 200.4L857.6 461.2M524.7 345.3L-195.8 479.2M459.1 184.8L852.4 481.4M613.4 337.4L-206.0 493.4M446.7 186.1L856.3 511.1M707.4 328.0L-216.8 508.3M416.0 172.3L850.5 535.7M796.9 319.1L-228.2 524.1M404.1 173.4L854.7 572.1M850.2 317.2L-240.3 540.8M377.7 161.1L815.8 572.5M850.8 336.0L-266.8 577.6M343.3 151.2L737.9 573.3M855.5 345.1L-281.4 597.8M322.9 141.4L698.9 573.6M851.4 356.8L-297.0 619.4M312.3 142.2L659.8 574.0M856.4 367.1L-9.4 570.9M294.5 133.3L620.6 574.4M852.2 380.2L69.1 570.1M278.4 125.3L581.4 574.8M857.5 391.8L127.6 574.3M268.6 125.9L542.2 575.2M853.0 406.6L206.4 573.6M254.4 118.6L502.9 575.6M858.7 419.8L285.1 572.8M244.9 119.2L463.6 575.9M854.0 436.7L363.5 572.1M232.3 112.5L424.2 576.3M860.1 451.7L441.7 571.3M223.2 113.0L384.8 576.7M855.1 471.1L519.8 570.6M212.1 106.8L345.3 577.1M861.7 488.5L581.4 574.8M203.2 107.4L305.7 577.5M856.3 511.1L659.8 574.0M194.2 107.9L266.2 577.9M850.5 535.7L737.9 573.3M184.7 102.1L226.5 578.3M857.8 557.9L815.8 572.5M176.0 102.6L186.8 578.6M167.3 103.1L147.1 579.0M157.8 110.0L107.3 579.4M148.5 110.6L69.1 570.1M139.2 111.1L29.9 570.5M129.8 111.7L-9.4 570.9M117.5 119.6L-48.8 571.2M107.5 120.2L-52.3 488.9M93.2 129.1L-52.3 421.0M82.3 129.8L-52.3 368.7M65.5 139.9L-52.3 327.3M53.8 140.7L-50.6 291.2M42.0 141.5L-73.8 294.1M21.2 153.2L-70.2 264.1M8.3 154.1L-67.3 239.2M-16.6 167.7L-64.8 218.1M-30.7 168.7L-62.7 200.1" stroke="#595959" stroke-opacity="0.55" stroke-width="1.35" fill="none"/>
<path d="M334.4 130.4L343.7 139.7" stroke="#8a4452" stroke-opacity="0.07" stroke-width="1.8" fill="none"/>
<path d="M343.7 139.7L354.3 150.3" stroke="#8a4452" stroke-opacity="0.21" stroke-width="1.8" fill="none"/>
<path d="M354.3 150.3L366.2 162.2" stroke="#8a4452" stroke-opacity="0.37" stroke-width="1.8" fill="none"/>
<path d="M366.2 162.2L379.7 175.7" stroke="#8a4452" stroke-opacity="0.56" stroke-width="1.8" fill="none"/>
<path d="M379.7 175.7L395.4 191.4" stroke="#8a4452" stroke-opacity="0.77" stroke-width="1.8" fill="none"/>
<path d="M395.4 191.4L413.6 209.6" stroke="#8a4452" stroke-opacity="1.00" stroke-width="1.8" fill="none"/>
<path d="M413.6 209.6L435.0 231.0" stroke="#8a4452" stroke-opacity="1.00" stroke-width="1.8" fill="none"/>
<path d="M435.0 231.0L460.6 256.6" stroke="#8a4452" stroke-opacity="1.00" stroke-width="1.8" fill="none"/>
<path d="M460.6 256.6L460.6 256.6" stroke="#8a4452" stroke-opacity="1.00" stroke-width="1.8" fill="none"/>
<path d="M460.6 256.6L462.8 258.8" stroke="#8a4452" stroke-opacity="1.00" stroke-width="1.8" fill="none"/>
<path d="M462.8 258.8L465.0 261.0" stroke="#8a4452" stroke-opacity="1.00" stroke-width="1.8" fill="none"/>
<path d="M465.0 261.0L467.3 263.3" stroke="#8a4452" stroke-opacity="1.00" stroke-width="1.8" fill="none"/>
<path d="M467.3 263.3L469.6 265.6" stroke="#8a4452" stroke-opacity="1.00" stroke-width="1.8" fill="none"/>
<path d="M469.6 265.6L472.0 268.0" stroke="#8a4452" stroke-opacity="1.00" stroke-width="1.8" fill="none"/>
<path d="M472.0 268.0L474.3 270.3" stroke="#8a4452" stroke-opacity="1.00" stroke-width="1.8" fill="none"/>
<path d="M474.3 270.3L476.7 272.7" stroke="#8a4452" stroke-opacity="1.00" stroke-width="1.8" fill="none"/>
<path d="M476.7 272.7L479.2 275.2" stroke="#8a4452" stroke-opacity="1.00" stroke-width="1.8" fill="none"/>
<path d="M479.2 275.2L481.7 277.7" stroke="#8a4452" stroke-opacity="1.00" stroke-width="1.8" fill="none"/>
<path d="M481.7 277.7L484.2 280.2" stroke="#8a4452" stroke-opacity="1.00" stroke-width="1.8" fill="none"/>
<path d="M484.2 280.2L486.8 282.8" stroke="#8a4452" stroke-opacity="1.00" stroke-width="1.8" fill="none"/>
<path d="M486.8 282.8L489.4 285.4" stroke="#8a4452" stroke-opacity="1.00" stroke-width="1.8" fill="none"/>
<path d="M489.4 285.4L492.1 288.1" stroke="#8a4452" stroke-opacity="1.00" stroke-width="1.8" fill="none"/>
<path d="M492.1 288.1L494.8 290.8" stroke="#8a4452" stroke-opacity="1.00" stroke-width="1.8" fill="none"/>
<path d="M494.8 290.8L497.6 293.6" stroke="#8a4452" stroke-opacity="1.00" stroke-width="1.8" fill="none"/>
<path d="M497.6 293.6L500.4 296.4" stroke="#8a4452" stroke-opacity="1.00" stroke-width="1.8" fill="none"/>
<path d="M500.4 296.4L503.2 299.2" stroke="#8a4452" stroke-opacity="1.00" stroke-width="1.8" fill="none"/>
<path d="M503.2 299.2L506.1 302.1" stroke="#8a4452" stroke-opacity="1.00" stroke-width="1.8" fill="none"/>
<path d="M506.1 302.1L509.1 305.1" stroke="#8a4452" stroke-opacity="1.00" stroke-width="1.8" fill="none"/>
<path d="M509.1 305.1L512.1 308.1" stroke="#8a4452" stroke-opacity="1.00" stroke-width="1.8" fill="none"/>
<path d="M512.1 308.1L515.1 311.1" stroke="#8a4452" stroke-opacity="1.00" stroke-width="1.8" fill="none"/>
<path d="M515.1 311.1L518.3 314.3" stroke="#8a4452" stroke-opacity="1.00" stroke-width="1.8" fill="none"/>
<path d="M518.3 314.3L521.4 317.4" stroke="#8a4452" stroke-opacity="1.00" stroke-width="1.8" fill="none"/>
<path d="M521.4 317.4L524.7 320.7" stroke="#8a4452" stroke-opacity="1.00" stroke-width="1.8" fill="none"/>
<path d="M524.7 320.7L528.0 324.0" stroke="#8a4452" stroke-opacity="1.00" stroke-width="1.8" fill="none"/>
<path d="M528.0 324.0L531.3 327.3" stroke="#8a4452" stroke-opacity="1.00" stroke-width="1.8" fill="none"/>
<path d="M531.3 327.3L534.7 330.7" stroke="#8a4452" stroke-opacity="1.00" stroke-width="1.8" fill="none"/>
<path d="M534.7 330.7L538.2 334.2" stroke="#8a4452" stroke-opacity="1.00" stroke-width="1.8" fill="none"/>
<path d="M538.2 334.2L541.8 337.8" stroke="#8a4452" stroke-opacity="1.00" stroke-width="1.8" fill="none"/>
<path d="M541.8 337.8L545.4 341.4" stroke="#8a4452" stroke-opacity="1.00" stroke-width="1.8" fill="none"/>
<path d="M545.4 341.4L549.1 345.1" stroke="#8a4452" stroke-opacity="1.00" stroke-width="1.8" fill="none"/>
<path d="M549.1 345.1L552.9 348.9" stroke="#8a4452" stroke-opacity="1.00" stroke-width="1.8" fill="none"/>
<path d="M552.9 348.9L556.7 352.7" stroke="#8a4452" stroke-opacity="1.00" stroke-width="1.8" fill="none"/>
<path d="M556.7 352.7L560.6 356.6" stroke="#8a4452" stroke-opacity="1.00" stroke-width="1.8" fill="none"/>
<path d="M560.6 356.6L564.7 360.7" stroke="#8a4452" stroke-opacity="1.00" stroke-width="1.8" fill="none"/>
<path d="M564.7 360.7L568.7 364.7" stroke="#8a4452" stroke-opacity="1.00" stroke-width="1.8" fill="none"/>
<path d="M568.7 364.7L572.9 368.9" stroke="#8a4452" stroke-opacity="1.00" stroke-width="1.8" fill="none"/>
<path d="M572.9 368.9L577.2 373.2" stroke="#8a4452" stroke-opacity="1.00" stroke-width="1.8" fill="none"/>
<path d="M577.2 373.2L581.5 377.5" stroke="#8a4452" stroke-opacity="1.00" stroke-width="1.8" fill="none"/>
<path d="M581.5 377.5L586.0 382.0" stroke="#8a4452" stroke-opacity="1.00" stroke-width="1.8" fill="none"/>
<path d="M586.0 382.0L590.6 386.6" stroke="#8a4452" stroke-opacity="1.00" stroke-width="1.8" fill="none"/>
<path d="M590.6 386.6L595.2 391.2" stroke="#8a4452" stroke-opacity="1.00" stroke-width="1.8" fill="none"/>
<path d="M595.2 391.2L600.0 396.0" stroke="#8a4452" stroke-opacity="1.00" stroke-width="1.8" fill="none"/>
<path d="M600.0 396.0L604.8 400.8" stroke="#8a4452" stroke-opacity="1.00" stroke-width="1.8" fill="none"/>
<path d="M604.8 400.8L609.8 405.8" stroke="#8a4452" stroke-opacity="1.00" stroke-width="1.8" fill="none"/>
<path d="M609.8 405.8L614.9 410.9" stroke="#8a4452" stroke-opacity="1.00" stroke-width="1.8" fill="none"/>
<path d="M614.9 410.9L620.1 416.1" stroke="#8a4452" stroke-opacity="1.00" stroke-width="1.8" fill="none"/>
<path d="M620.1 416.1L625.5 421.5" stroke="#8a4452" stroke-opacity="1.00" stroke-width="1.8" fill="none"/>
<path d="M625.5 421.5L630.9 426.9" stroke="#8a4452" stroke-opacity="1.00" stroke-width="1.8" fill="none"/>
<path d="M630.9 426.9L636.5 432.5" stroke="#8a4452" stroke-opacity="1.00" stroke-width="1.8" fill="none"/>
<path d="M636.5 432.5L642.3 438.3" stroke="#8a4452" stroke-opacity="1.00" stroke-width="1.8" fill="none"/>
<path d="M642.3 438.3L648.1 444.1" stroke="#8a4452" stroke-opacity="1.00" stroke-width="1.8" fill="none"/>
<path d="M648.1 444.1L654.2 450.2" stroke="#8a4452" stroke-opacity="1.00" stroke-width="1.8" fill="none"/>
<path d="M654.2 450.2L660.4 456.4" stroke="#8a4452" stroke-opacity="1.00" stroke-width="1.8" fill="none"/>
<path d="M660.4 456.4L666.7 462.7" stroke="#8a4452" stroke-opacity="1.00" stroke-width="1.8" fill="none"/>
<path d="M666.7 462.7L673.2 469.2" stroke="#8a4452" stroke-opacity="1.00" stroke-width="1.8" fill="none"/>
<path d="M673.2 469.2L679.9 475.9" stroke="#8a4452" stroke-opacity="1.00" stroke-width="1.8" fill="none"/>
<path d="M679.9 475.9L686.8 482.8" stroke="#8a4452" stroke-opacity="1.00" stroke-width="1.8" fill="none"/>
<path d="M686.8 482.8L693.9 489.9" stroke="#8a4452" stroke-opacity="1.00" stroke-width="1.8" fill="none"/>
<path d="M693.9 489.9L701.1 497.1" stroke="#8a4452" stroke-opacity="1.00" stroke-width="1.8" fill="none"/>
<path d="M701.1 497.1L708.6 504.6" stroke="#8a4452" stroke-opacity="1.00" stroke-width="1.8" fill="none"/>
<path d="M708.6 504.6L716.3 512.3" stroke="#8a4452" stroke-opacity="1.00" stroke-width="1.8" fill="none"/>
<path d="M716.3 512.3L724.2 520.2" stroke="#8a4452" stroke-opacity="1.00" stroke-width="1.8" fill="none"/>
<path d="M724.2 520.2L732.3 528.3" stroke="#8a4452" stroke-opacity="1.00" stroke-width="1.8" fill="none"/>
<path d="M732.3 528.3L740.7 536.7" stroke="#8a4452" stroke-opacity="1.00" stroke-width="1.8" fill="none"/>
<path d="M740.7 536.7L749.3 545.3" stroke="#8a4452" stroke-opacity="1.00" stroke-width="1.8" fill="none"/>
<path d="M749.3 545.3L758.2 554.2" stroke="#8a4452" stroke-opacity="1.00" stroke-width="1.8" fill="none"/>
<path d="M758.2 554.2L767.4 563.4" stroke="#8a4452" stroke-opacity="1.00" stroke-width="1.8" fill="none"/>
<path d="M767.4 563.4L776.9 572.9" stroke="#8a4452" stroke-opacity="1.00" stroke-width="1.8" fill="none"/>
<path d="M854.6 325.5L846.3 327.2" stroke="#66803f" stroke-opacity="1.00" stroke-width="1.8" fill="none"/>
<path d="M846.3 327.2L837.9 329.0" stroke="#66803f" stroke-opacity="1.00" stroke-width="1.8" fill="none"/>
<path d="M837.9 329.0L829.4 330.8" stroke="#66803f" stroke-opacity="1.00" stroke-width="1.8" fill="none"/>
<path d="M829.4 330.8L820.8 332.6" stroke="#66803f" stroke-opacity="1.00" stroke-width="1.8" fill="none"/>
<path d="M820.8 332.6L812.2 334.4" stroke="#66803f" stroke-opacity="1.00" stroke-width="1.8" fill="none"/>
<path d="M812.2 334.4L803.4 336.2" stroke="#66803f" stroke-opacity="1.00" stroke-width="1.8" fill="none"/>
<path d="M803.4 336.2L794.6 338.1" stroke="#66803f" stroke-opacity="1.00" stroke-width="1.8" fill="none"/>
<path d="M794.6 338.1L785.7 340.0" stroke="#66803f" stroke-opacity="1.00" stroke-width="1.8" fill="none"/>
<path d="M785.7 340.0L776.7 341.9" stroke="#66803f" stroke-opacity="1.00" stroke-width="1.8" fill="none"/>
<path d="M776.7 341.9L767.6 343.8" stroke="#66803f" stroke-opacity="1.00" stroke-width="1.8" fill="none"/>
<path d="M767.6 343.8L758.4 345.7" stroke="#66803f" stroke-opacity="1.00" stroke-width="1.8" fill="none"/>
<path d="M758.4 345.7L749.1 347.7" stroke="#66803f" stroke-opacity="1.00" stroke-width="1.8" fill="none"/>
<path d="M749.1 347.7L739.7 349.7" stroke="#66803f" stroke-opacity="1.00" stroke-width="1.8" fill="none"/>
<path d="M739.7 349.7L730.2 351.7" stroke="#66803f" stroke-opacity="1.00" stroke-width="1.8" fill="none"/>
<path d="M730.2 351.7L720.6 353.7" stroke="#66803f" stroke-opacity="1.00" stroke-width="1.8" fill="none"/>
<path d="M720.6 353.7L710.9 355.7" stroke="#66803f" stroke-opacity="1.00" stroke-width="1.8" fill="none"/>
<path d="M710.9 355.7L701.1 357.8" stroke="#66803f" stroke-opacity="1.00" stroke-width="1.8" fill="none"/>
<path d="M701.1 357.8L691.2 359.9" stroke="#66803f" stroke-opacity="1.00" stroke-width="1.8" fill="none"/>
<path d="M691.2 359.9L681.2 362.0" stroke="#66803f" stroke-opacity="1.00" stroke-width="1.8" fill="none"/>
<path d="M681.2 362.0L671.1 364.1" stroke="#66803f" stroke-opacity="1.00" stroke-width="1.8" fill="none"/>
<path d="M671.1 364.1L660.8 366.2" stroke="#66803f" stroke-opacity="1.00" stroke-width="1.8" fill="none"/>
<path d="M660.8 366.2L650.5 368.4" stroke="#66803f" stroke-opacity="1.00" stroke-width="1.8" fill="none"/>
<path d="M650.5 368.4L640.0 370.6" stroke="#66803f" stroke-opacity="1.00" stroke-width="1.8" fill="none"/>
<path d="M640.0 370.6L629.5 372.8" stroke="#66803f" stroke-opacity="1.00" stroke-width="1.8" fill="none"/>
<path d="M629.5 372.8L618.8 375.1" stroke="#66803f" stroke-opacity="1.00" stroke-width="1.8" fill="none"/>
<path d="M618.8 375.1L608.0 377.4" stroke="#66803f" stroke-opacity="1.00" stroke-width="1.8" fill="none"/>
<path d="M608.0 377.4L597.1 379.7" stroke="#66803f" stroke-opacity="1.00" stroke-width="1.8" fill="none"/>
<path d="M597.1 379.7L586.0 382.0" stroke="#66803f" stroke-opacity="1.00" stroke-width="1.8" fill="none"/>
<path d="M586.0 382.0L574.8 384.4" stroke="#66803f" stroke-opacity="1.00" stroke-width="1.8" fill="none"/>
<path d="M574.8 384.4L563.5 386.7" stroke="#66803f" stroke-opacity="1.00" stroke-width="1.8" fill="none"/>
<path d="M563.5 386.7L552.1 389.1" stroke="#66803f" stroke-opacity="1.00" stroke-width="1.8" fill="none"/>
<path d="M552.1 389.1L540.5 391.6" stroke="#66803f" stroke-opacity="1.00" stroke-width="1.8" fill="none"/>
<path d="M540.5 391.6L528.8 394.0" stroke="#66803f" stroke-opacity="1.00" stroke-width="1.8" fill="none"/>
<path d="M528.8 394.0L517.0 396.5" stroke="#66803f" stroke-opacity="1.00" stroke-width="1.8" fill="none"/>
<path d="M517.0 396.5L505.0 399.1" stroke="#66803f" stroke-opacity="1.00" stroke-width="1.8" fill="none"/>
<path d="M505.0 399.1L492.9 401.6" stroke="#66803f" stroke-opacity="1.00" stroke-width="1.8" fill="none"/>
<path d="M492.9 401.6L480.6 404.2" stroke="#66803f" stroke-opacity="1.00" stroke-width="1.8" fill="none"/>
<path d="M480.6 404.2L468.2 406.8" stroke="#66803f" stroke-opacity="1.00" stroke-width="1.8" fill="none"/>
<path d="M468.2 406.8L455.6 409.4" stroke="#66803f" stroke-opacity="1.00" stroke-width="1.8" fill="none"/>
<path d="M455.6 409.4L442.9 412.1" stroke="#66803f" stroke-opacity="1.00" stroke-width="1.8" fill="none"/>
<path d="M442.9 412.1L430.0 414.8" stroke="#66803f" stroke-opacity="1.00" stroke-width="1.8" fill="none"/>
<path d="M430.0 414.8L417.0 417.6" stroke="#66803f" stroke-opacity="1.00" stroke-width="1.8" fill="none"/>
<path d="M417.0 417.6L403.8 420.4" stroke="#66803f" stroke-opacity="1.00" stroke-width="1.8" fill="none"/>
<path d="M403.8 420.4L390.4 423.2" stroke="#66803f" stroke-opacity="1.00" stroke-width="1.8" fill="none"/>
<path d="M390.4 423.2L376.9 426.0" stroke="#66803f" stroke-opacity="1.00" stroke-width="1.8" fill="none"/>
<path d="M376.9 426.0L363.2 428.9" stroke="#66803f" stroke-opacity="1.00" stroke-width="1.8" fill="none"/>
<path d="M363.2 428.9L349.3 431.8" stroke="#66803f" stroke-opacity="1.00" stroke-width="1.8" fill="none"/>
<path d="M349.3 431.8L335.3 434.8" stroke="#66803f" stroke-opacity="1.00" stroke-width="1.8" fill="none"/>
<path d="M335.3 434.8L321.1 437.8" stroke="#66803f" stroke-opacity="1.00" stroke-width="1.8" fill="none"/>
<path d="M321.1 437.8L306.7 440.8" stroke="#66803f" stroke-opacity="1.00" stroke-width="1.8" fill="none"/>
<path d="M306.7 440.8L292.1 443.9" stroke="#66803f" stroke-opacity="1.00" stroke-width="1.8" fill="none"/>
<path d="M292.1 443.9L277.3 447.0" stroke="#66803f" stroke-opacity="1.00" stroke-width="1.8" fill="none"/>
<path d="M277.3 447.0L262.3 450.1" stroke="#66803f" stroke-opacity="1.00" stroke-width="1.8" fill="none"/>
<path d="M262.3 450.1L247.1 453.3" stroke="#66803f" stroke-opacity="1.00" stroke-width="1.8" fill="none"/>
<path d="M247.1 453.3L231.7 456.6" stroke="#66803f" stroke-opacity="1.00" stroke-width="1.8" fill="none"/>
<path d="M231.7 456.6L216.1 459.9" stroke="#66803f" stroke-opacity="1.00" stroke-width="1.8" fill="none"/>
<path d="M216.1 459.9L200.3 463.2" stroke="#66803f" stroke-opacity="1.00" stroke-width="1.8" fill="none"/>
<path d="M200.3 463.2L184.3 466.6" stroke="#66803f" stroke-opacity="1.00" stroke-width="1.8" fill="none"/>
<path d="M184.3 466.6L168.0 470.0" stroke="#66803f" stroke-opacity="1.00" stroke-width="1.8" fill="none"/>
<path d="M168.0 470.0L151.6 473.4" stroke="#66803f" stroke-opacity="1.00" stroke-width="1.8" fill="none"/>
<path d="M151.6 473.4L134.9 477.0" stroke="#66803f" stroke-opacity="1.00" stroke-width="1.8" fill="none"/>
<path d="M134.9 477.0L117.9 480.5" stroke="#66803f" stroke-opacity="1.00" stroke-width="1.8" fill="none"/>
<path d="M117.9 480.5L100.8 484.1" stroke="#66803f" stroke-opacity="1.00" stroke-width="1.8" fill="none"/>
<path d="M100.8 484.1L83.4 487.8" stroke="#66803f" stroke-opacity="1.00" stroke-width="1.8" fill="none"/>
<path d="M83.4 487.8L65.7 491.5" stroke="#66803f" stroke-opacity="1.00" stroke-width="1.8" fill="none"/>
<path d="M65.7 491.5L47.8 495.3" stroke="#66803f" stroke-opacity="1.00" stroke-width="1.8" fill="none"/>
<path d="M47.8 495.3L29.6 499.1" stroke="#66803f" stroke-opacity="1.00" stroke-width="1.8" fill="none"/>
<path d="M29.6 499.1L11.1 503.0" stroke="#66803f" stroke-opacity="1.00" stroke-width="1.8" fill="none"/>
<path d="M11.1 503.0L11.1 503.0" stroke="#66803f" stroke-opacity="1.00" stroke-width="1.8" fill="none"/>
<path d="M11.1 503.0L-253.1 558.6" stroke="#66803f" stroke-opacity="1.00" stroke-width="1.8" fill="none"/>
<defs><linearGradient id="topfade" x1="0" y1="56" x2="0" y2="245" gradientUnits="userSpaceOnUse"><stop offset="0" stop-color="#363636" stop-opacity="1"/><stop offset="0.3" stop-color="#373737" stop-opacity="1"/><stop offset="1" stop-color="#373737" stop-opacity="0"/></linearGradient></defs>
<rect x="0" y="56" width="800" height="189" fill="url(#topfade)"/>
</svg><svg width="800" height="519" style="left:0;top:0">
<defs>
<linearGradient id="bodyg" x1="535" y1="0" x2="635" y2="0" gradientUnits="userSpaceOnUse">
<stop offset="0" stop-color="#767676"/><stop offset="0.15" stop-color="#8e8e8e"/><stop offset="0.45" stop-color="#a2a2a2"/><stop offset="0.75" stop-color="#9a9a9a"/><stop offset="1" stop-color="#888888"/></linearGradient>
<linearGradient id="baseg" x1="505" y1="0" x2="667" y2="0" gradientUnits="userSpaceOnUse">
<stop offset="0" stop-color="#a2a2a2"/><stop offset="0.3" stop-color="#b0b0b0"/><stop offset="0.7" stop-color="#a8a8a8"/><stop offset="1" stop-color="#909090"/></linearGradient>
<clipPath id="sc"><path d="M585.0 96.0C585.5 94.2 586.3 92.1 587.5 91.0C588.7 89.9 590.5 89.5 592.0 89.5C593.5 89.5 595.2 90.3 596.5 91.0C597.8 91.7 597.9 93.2 599.5 93.5C601.1 93.8 602.2 92.3 606.0 92.8C609.8 93.2 617.7 95.1 622.4 96.2C627.1 97.3 630.4 98.1 634.0 99.6C637.6 101.1 642.2 103.7 644.3 105.4C646.4 107.1 646.9 107.9 646.7 110.0C646.5 112.1 645.1 115.8 643.2 118.1C641.3 120.4 637.8 121.8 635.1 123.9C632.4 126.0 629.1 128.1 627.0 130.8C624.9 133.5 624.3 136.9 622.4 140.0C620.5 143.1 617.2 146.6 615.5 149.3C613.8 152.0 612.4 154.3 612.0 156.2C611.6 158.1 612.4 158.1 613.2 160.8C614.0 163.5 615.6 168.2 616.6 172.4C617.6 176.7 618.2 181.6 619.0 186.3C619.8 191.0 620.6 196.8 621.2 200.8C621.8 204.8 621.4 207.9 622.5 210.2C623.6 212.4 626.3 212.3 627.9 214.3C629.5 216.3 631.3 219.2 632.0 222.4C632.7 225.6 632.7 230.3 632.0 233.2C631.3 236.1 629.9 237.7 627.9 239.9C625.9 242.1 621.6 243.2 619.8 246.6C618.0 250.0 618.0 256.0 617.1 260.1C616.2 264.2 615.3 266.9 614.4 271.0C613.5 275.1 612.6 279.0 611.7 284.4C610.8 289.8 609.5 297.4 609.0 303.3C608.5 309.2 608.0 316.4 609.0 319.5C610.0 322.6 611.2 321.0 615.3 322.0C619.4 323.0 628.0 323.0 633.8 325.5C639.6 328.0 646.5 333.1 650.0 337.0C653.5 340.9 653.4 344.7 654.6 348.6C655.8 352.5 655.5 356.4 657.0 360.2C658.5 364.0 662.5 367.8 663.9 371.7C665.2 375.6 665.9 379.1 665.1 383.3C664.3 387.6 663.0 393.0 659.3 397.2C655.6 401.4 649.6 405.6 643.1 408.7C636.6 411.8 628.5 413.9 620.0 415.7C611.5 417.4 601.5 418.8 592.2 419.2C582.9 419.6 573.7 419.2 564.4 418.0C555.1 416.8 544.7 414.9 536.6 412.2C528.5 409.5 520.6 405.5 515.8 401.8C511.0 398.1 509.2 394.8 507.7 390.2C506.2 385.6 506.0 378.4 506.6 374.0C507.2 369.6 509.3 366.7 511.2 363.6C513.1 360.5 516.8 358.6 518.1 355.5C519.5 352.4 518.1 348.2 519.3 345.1C520.5 342.0 521.4 340.1 525.1 337.0C528.8 333.9 535.7 328.9 541.3 326.6C546.9 324.3 556.1 325.2 558.6 323.1C561.1 321.0 557.1 318.5 556.3 313.9C555.5 309.2 555.7 300.6 553.7 295.2C551.7 289.8 547.0 286.2 544.3 281.7C541.6 277.2 538.6 273.6 537.5 268.2C536.4 262.8 536.8 254.7 537.5 249.3C538.2 243.9 540.0 240.0 541.6 235.9C543.2 231.8 546.3 229.1 547.0 225.0C547.7 220.9 545.9 215.8 545.6 211.6C545.4 207.4 545.4 205.0 545.5 200.0C545.6 195.0 545.7 187.0 546.2 181.6C546.7 176.2 547.4 172.4 548.5 167.8C549.6 163.2 551.2 158.6 553.1 154.0C555.0 149.4 557.3 144.6 560.0 140.0C562.7 135.4 566.6 130.8 569.3 126.2C572.0 121.6 573.7 116.3 576.2 112.3C578.7 108.3 582.8 104.7 584.3 102.0C585.8 99.3 584.5 97.8 585.0 96.0Z"/></clipPath>
<filter id="bl1" x="-50%" y="-50%" width="200%" height="200%"><feGaussianBlur stdDeviation="1"/></filter>
<filter id="bl2" x="-50%" y="-50%" width="200%" height="200%"><feGaussianBlur stdDeviation="2.2"/></filter>
<filter id="bl3" x="-50%" y="-50%" width="200%" height="200%"><feGaussianBlur stdDeviation="3.5"/></filter>
<filter id="rock" x="0" y="0" width="100%" height="100%">
 <feTurbulence type="fractalNoise" baseFrequency="0.12 0.22" numOctaves="3" seed="11" result="n"/>
 <feColorMatrix in="n" type="matrix" values="0 0 0 0.55 0.15  0 0 0 0.55 0.15  0 0 0 0.55 0.15  0 0 0 0 1" result="g0"/>
 <feGaussianBlur in="g0" stdDeviation="0.6" result="g"/>
 <feComposite in="g" in2="SourceGraphic" operator="in"/>
</filter>
<filter id="fur" x="0" y="0" width="100%" height="100%">
 <feTurbulence type="fractalNoise" baseFrequency="0.35 0.22" numOctaves="2" seed="7" result="n"/>
 <feColorMatrix in="n" type="matrix" values="0 0 0 0 0.5  0 0 0 0 0.5  0 0 0 0 0.5  1.6 0 0 0 -0.55" />
</filter>
</defs>
<path d="M585.0 96.0C585.5 94.2 586.3 92.1 587.5 91.0C588.7 89.9 590.5 89.5 592.0 89.5C593.5 89.5 595.2 90.3 596.5 91.0C597.8 91.7 597.9 93.2 599.5 93.5C601.1 93.8 602.2 92.3 606.0 92.8C609.8 93.2 617.7 95.1 622.4 96.2C627.1 97.3 630.4 98.1 634.0 99.6C637.6 101.1 642.2 103.7 644.3 105.4C646.4 107.1 646.9 107.9 646.7 110.0C646.5 112.1 645.1 115.8 643.2 118.1C641.3 120.4 637.8 121.8 635.1 123.9C632.4 126.0 629.1 128.1 627.0 130.8C624.9 133.5 624.3 136.9 622.4 140.0C620.5 143.1 617.2 146.6 615.5 149.3C613.8 152.0 612.4 154.3 612.0 156.2C611.6 158.1 612.4 158.1 613.2 160.8C614.0 163.5 615.6 168.2 616.6 172.4C617.6 176.7 618.2 181.6 619.0 186.3C619.8 191.0 620.6 196.8 621.2 200.8C621.8 204.8 621.4 207.9 622.5 210.2C623.6 212.4 626.3 212.3 627.9 214.3C629.5 216.3 631.3 219.2 632.0 222.4C632.7 225.6 632.7 230.3 632.0 233.2C631.3 236.1 629.9 237.7 627.9 239.9C625.9 242.1 621.6 243.2 619.8 246.6C618.0 250.0 618.0 256.0 617.1 260.1C616.2 264.2 615.3 266.9 614.4 271.0C613.5 275.1 612.6 279.0 611.7 284.4C610.8 289.8 609.5 297.4 609.0 303.3C608.5 309.2 608.0 316.4 609.0 319.5C610.0 322.6 611.2 321.0 615.3 322.0C619.4 323.0 628.0 323.0 633.8 325.5C639.6 328.0 646.5 333.1 650.0 337.0C653.5 340.9 653.4 344.7 654.6 348.6C655.8 352.5 655.5 356.4 657.0 360.2C658.5 364.0 662.5 367.8 663.9 371.7C665.2 375.6 665.9 379.1 665.1 383.3C664.3 387.6 663.0 393.0 659.3 397.2C655.6 401.4 649.6 405.6 643.1 408.7C636.6 411.8 628.5 413.9 620.0 415.7C611.5 417.4 601.5 418.8 592.2 419.2C582.9 419.6 573.7 419.2 564.4 418.0C555.1 416.8 544.7 414.9 536.6 412.2C528.5 409.5 520.6 405.5 515.8 401.8C511.0 398.1 509.2 394.8 507.7 390.2C506.2 385.6 506.0 378.4 506.6 374.0C507.2 369.6 509.3 366.7 511.2 363.6C513.1 360.5 516.8 358.6 518.1 355.5C519.5 352.4 518.1 348.2 519.3 345.1C520.5 342.0 521.4 340.1 525.1 337.0C528.8 333.9 535.7 328.9 541.3 326.6C546.9 324.3 556.1 325.2 558.6 323.1C561.1 321.0 557.1 318.5 556.3 313.9C555.5 309.2 555.7 300.6 553.7 295.2C551.7 289.8 547.0 286.2 544.3 281.7C541.6 277.2 538.6 273.6 537.5 268.2C536.4 262.8 536.8 254.7 537.5 249.3C538.2 243.9 540.0 240.0 541.6 235.9C543.2 231.8 546.3 229.1 547.0 225.0C547.7 220.9 545.9 215.8 545.6 211.6C545.4 207.4 545.4 205.0 545.5 200.0C545.6 195.0 545.7 187.0 546.2 181.6C546.7 176.2 547.4 172.4 548.5 167.8C549.6 163.2 551.2 158.6 553.1 154.0C555.0 149.4 557.3 144.6 560.0 140.0C562.7 135.4 566.6 130.8 569.3 126.2C572.0 121.6 573.7 116.3 576.2 112.3C578.7 108.3 582.8 104.7 584.3 102.0C585.8 99.3 584.5 97.8 585.0 96.0Z" fill="none" stroke="#3a2e26" stroke-width="4" opacity="0.6"/>
<path d="M585.0 96.0C585.5 94.2 586.3 92.1 587.5 91.0C588.7 89.9 590.5 89.5 592.0 89.5C593.5 89.5 595.2 90.3 596.5 91.0C597.8 91.7 597.9 93.2 599.5 93.5C601.1 93.8 602.2 92.3 606.0 92.8C609.8 93.2 617.7 95.1 622.4 96.2C627.1 97.3 630.4 98.1 634.0 99.6C637.6 101.1 642.2 103.7 644.3 105.4C646.4 107.1 646.9 107.9 646.7 110.0C646.5 112.1 645.1 115.8 643.2 118.1C641.3 120.4 637.8 121.8 635.1 123.9C632.4 126.0 629.1 128.1 627.0 130.8C624.9 133.5 624.3 136.9 622.4 140.0C620.5 143.1 617.2 146.6 615.5 149.3C613.8 152.0 612.4 154.3 612.0 156.2C611.6 158.1 612.4 158.1 613.2 160.8C614.0 163.5 615.6 168.2 616.6 172.4C617.6 176.7 618.2 181.6 619.0 186.3C619.8 191.0 620.6 196.8 621.2 200.8C621.8 204.8 621.4 207.9 622.5 210.2C623.6 212.4 626.3 212.3 627.9 214.3C629.5 216.3 631.3 219.2 632.0 222.4C632.7 225.6 632.7 230.3 632.0 233.2C631.3 236.1 629.9 237.7 627.9 239.9C625.9 242.1 621.6 243.2 619.8 246.6C618.0 250.0 618.0 256.0 617.1 260.1C616.2 264.2 615.3 266.9 614.4 271.0C613.5 275.1 612.6 279.0 611.7 284.4C610.8 289.8 609.5 297.4 609.0 303.3C608.5 309.2 608.0 316.4 609.0 319.5C610.0 322.6 611.2 321.0 615.3 322.0C619.4 323.0 628.0 323.0 633.8 325.5C639.6 328.0 646.5 333.1 650.0 337.0C653.5 340.9 653.4 344.7 654.6 348.6C655.8 352.5 655.5 356.4 657.0 360.2C658.5 364.0 662.5 367.8 663.9 371.7C665.2 375.6 665.9 379.1 665.1 383.3C664.3 387.6 663.0 393.0 659.3 397.2C655.6 401.4 649.6 405.6 643.1 408.7C636.6 411.8 628.5 413.9 620.0 415.7C611.5 417.4 601.5 418.8 592.2 419.2C582.9 419.6 573.7 419.2 564.4 418.0C555.1 416.8 544.7 414.9 536.6 412.2C528.5 409.5 520.6 405.5 515.8 401.8C511.0 398.1 509.2 394.8 507.7 390.2C506.2 385.6 506.0 378.4 506.6 374.0C507.2 369.6 509.3 366.7 511.2 363.6C513.1 360.5 516.8 358.6 518.1 355.5C519.5 352.4 518.1 348.2 519.3 345.1C520.5 342.0 521.4 340.1 525.1 337.0C528.8 333.9 535.7 328.9 541.3 326.6C546.9 324.3 556.1 325.2 558.6 323.1C561.1 321.0 557.1 318.5 556.3 313.9C555.5 309.2 555.7 300.6 553.7 295.2C551.7 289.8 547.0 286.2 544.3 281.7C541.6 277.2 538.6 273.6 537.5 268.2C536.4 262.8 536.8 254.7 537.5 249.3C538.2 243.9 540.0 240.0 541.6 235.9C543.2 231.8 546.3 229.1 547.0 225.0C547.7 220.9 545.9 215.8 545.6 211.6C545.4 207.4 545.4 205.0 545.5 200.0C545.6 195.0 545.7 187.0 546.2 181.6C546.7 176.2 547.4 172.4 548.5 167.8C549.6 163.2 551.2 158.6 553.1 154.0C555.0 149.4 557.3 144.6 560.0 140.0C562.7 135.4 566.6 130.8 569.3 126.2C572.0 121.6 573.7 116.3 576.2 112.3C578.7 108.3 582.8 104.7 584.3 102.0C585.8 99.3 584.5 97.8 585.0 96.0Z" fill="url(#bodyg)"/>
<g clip-path="url(#sc)">
 <!-- base -->
 <rect x="500" y="330" width="170" height="95" fill="url(#baseg)"/>
 <ellipse cx="586" cy="347" rx="71" ry="21" fill="#b2b2b2"/>
 <ellipse cx="587" cy="345" rx="63" ry="17" fill="#a9a9a9"/>
 <ellipse cx="587" cy="345" rx="60" ry="15" fill="#a0a0a0" filter="url(#rock)" opacity="0.9"/>
 <path d="M516 355 Q586 386 658 355" stroke="#8e8e8e" stroke-width="1.5" fill="none" filter="url(#bl1)"/>
 <path d="M511 368 Q586 399 662 368" stroke="#bdbdbd" stroke-width="4" fill="none" filter="url(#bl1)"/>
 <path d="M508 379 Q586 411 665 379" stroke="#8c8c8c" stroke-width="1.5" fill="none" filter="url(#bl1)"/>
 <path d="M507 390 Q586 421 665 390" stroke="#bababa" stroke-width="3.5" fill="none" filter="url(#bl1)"/>
 <path d="M505 402 Q586 434 668 402 L668 425 L505 425Z" fill="#8f8f8f" filter="url(#bl2)"/>
 <ellipse cx="530" cy="385" rx="12" ry="20" fill="#b8b8b8" opacity="0.5" filter="url(#bl3)"/>
 <!-- legs -->
 <path d="M553 284 Q575 296 604 286" stroke="#6e6e6e" stroke-width="4" fill="none" opacity="0.7" filter="url(#bl2)"/>
 <path d="M572 292 L581 292 L584 350 L577 336 Z" fill="#707070" opacity="0.6" filter="url(#bl2)"/>
 <path d="M583 292 Q596 288 609 294 L610 355 Q600 368 588 362 Z" fill="#a8a8a8" opacity="0.95" filter="url(#bl1)"/>
 <path d="M556 292 Q563 290 571 294 L573 332 Q565 336 558 330 Z" fill="#9a9a9a" opacity="0.8" filter="url(#bl1)"/>
 
 <!-- rim shading -->
 <path d="M585 94 C570 110 552 145 547 180 C544 215 540 240 537 265 C540 285 552 295 555 320" stroke="#707070" stroke-width="6" fill="none" opacity="0.55" filter="url(#bl3)"/>
 <!-- body features -->
 <ellipse cx="598" cy="175" rx="16" ry="20" fill="#b6b6b6" opacity="0.55" filter="url(#bl3)"/>
 <ellipse cx="570" cy="240" rx="18" ry="30" fill="#acacac" opacity="0.5" filter="url(#bl3)"/>
 <path d="M575 206 Q586 196 600 206" stroke="#6a6a6a" stroke-width="3" fill="none" opacity="0.75" filter="url(#bl2)"/>
 <path d="M588 152 Q600 175 617 200" stroke="#707070" stroke-width="3" fill="none" opacity="0.45" filter="url(#bl2)"/>
 <ellipse cx="612" cy="218" rx="13" ry="8" fill="#b2b2b2" opacity="0.6" filter="url(#bl2)"/>
 <path d="M598 232 Q608 236 620 234" stroke="#626262" stroke-width="3.5" fill="none" opacity="0.8" filter="url(#bl2)"/>
 <path d="M608 240 Q614 248 621 250" stroke="#5a5a5a" stroke-width="4" fill="none" opacity="0.8" filter="url(#bl2)"/>
 <ellipse cx="625" cy="228" rx="5" ry="10" fill="#b4b4b4" opacity="0.6" filter="url(#bl2)"/>
 <path d="M612 160 Q615 185 622 206" stroke="#7c7c7c" stroke-width="3" fill="none" opacity="0.5" filter="url(#bl2)"/>
 <path d="M548 240 Q552 262 546 280" stroke="#707070" stroke-width="5" fill="none" opacity="0.5" filter="url(#bl3)"/>
 <path d="M574 252 Q575 270 572 290" stroke="#6a6a6a" stroke-width="2.5" fill="none" opacity="0.6" filter="url(#bl1)"/>
 <ellipse cx="560" cy="262" rx="10" ry="18" fill="#b0b0b0" opacity="0.45" filter="url(#bl3)"/>
 <ellipse cx="590" cy="262" rx="11" ry="18" fill="#b0b0b0" opacity="0.45" filter="url(#bl3)"/>
 <!-- head -->
 <ellipse cx="602.5" cy="108" rx="3.4" ry="8.5" fill="#4a4a4a" filter="url(#bl1)"/>
 <ellipse cx="621" cy="104" rx="2.4" ry="4.2" fill="#484848" filter="url(#bl1)"/>
 <path d="M604 126 Q605 140 616 150" stroke="#4e4e4e" stroke-width="8" fill="none" opacity="0.85" filter="url(#bl2)"/>
 <path d="M614 128 Q620 138 622 146" stroke="#5a5a5a" stroke-width="4" fill="none" opacity="0.7" filter="url(#bl2)"/>
 <path d="M622 118 Q630 122 637 119" stroke="#707070" stroke-width="3" fill="none" opacity="0.7" filter="url(#bl2)"/>
 <ellipse cx="636" cy="109" rx="8" ry="6" fill="#bdbdbd" opacity="0.8" filter="url(#bl2)"/>
 <ellipse cx="592" cy="96" rx="6" ry="4" fill="#c0c0c0" opacity="0.6" filter="url(#bl2)"/>
 <ellipse cx="585" cy="135" rx="12" ry="16" fill="#b4b4b4" opacity="0.5" filter="url(#bl3)"/>
 <!-- fur texture -->
 <rect x="530" y="85" width="125" height="340" filter="url(#fur)" opacity="0.3"/>
</g>
<path d="M585.0 96.0C585.5 94.2 586.3 92.1 587.5 91.0C588.7 89.9 590.5 89.5 592.0 89.5C593.5 89.5 595.2 90.3 596.5 91.0C597.8 91.7 597.9 93.2 599.5 93.5C601.1 93.8 602.2 92.3 606.0 92.8C609.8 93.2 617.7 95.1 622.4 96.2C627.1 97.3 630.4 98.1 634.0 99.6C637.6 101.1 642.2 103.7 644.3 105.4C646.4 107.1 646.9 107.9 646.7 110.0C646.5 112.1 645.1 115.8 643.2 118.1C641.3 120.4 637.8 121.8 635.1 123.9C632.4 126.0 629.1 128.1 627.0 130.8C624.9 133.5 624.3 136.9 622.4 140.0C620.5 143.1 617.2 146.6 615.5 149.3C613.8 152.0 612.4 154.3 612.0 156.2C611.6 158.1 612.4 158.1 613.2 160.8C614.0 163.5 615.6 168.2 616.6 172.4C617.6 176.7 618.2 181.6 619.0 186.3C619.8 191.0 620.6 196.8 621.2 200.8C621.8 204.8 621.4 207.9 622.5 210.2C623.6 212.4 626.3 212.3 627.9 214.3C629.5 216.3 631.3 219.2 632.0 222.4C632.7 225.6 632.7 230.3 632.0 233.2C631.3 236.1 629.9 237.7 627.9 239.9C625.9 242.1 621.6 243.2 619.8 246.6C618.0 250.0 618.0 256.0 617.1 260.1C616.2 264.2 615.3 266.9 614.4 271.0C613.5 275.1 612.6 279.0 611.7 284.4C610.8 289.8 609.5 297.4 609.0 303.3C608.5 309.2 608.0 316.4 609.0 319.5C610.0 322.6 611.2 321.0 615.3 322.0C619.4 323.0 628.0 323.0 633.8 325.5C639.6 328.0 646.5 333.1 650.0 337.0C653.5 340.9 653.4 344.7 654.6 348.6C655.8 352.5 655.5 356.4 657.0 360.2C658.5 364.0 662.5 367.8 663.9 371.7C665.2 375.6 665.9 379.1 665.1 383.3C664.3 387.6 663.0 393.0 659.3 397.2C655.6 401.4 649.6 405.6 643.1 408.7C636.6 411.8 628.5 413.9 620.0 415.7C611.5 417.4 601.5 418.8 592.2 419.2C582.9 419.6 573.7 419.2 564.4 418.0C555.1 416.8 544.7 414.9 536.6 412.2C528.5 409.5 520.6 405.5 515.8 401.8C511.0 398.1 509.2 394.8 507.7 390.2C506.2 385.6 506.0 378.4 506.6 374.0C507.2 369.6 509.3 366.7 511.2 363.6C513.1 360.5 516.8 358.6 518.1 355.5C519.5 352.4 518.1 348.2 519.3 345.1C520.5 342.0 521.4 340.1 525.1 337.0C528.8 333.9 535.7 328.9 541.3 326.6C546.9 324.3 556.1 325.2 558.6 323.1C561.1 321.0 557.1 318.5 556.3 313.9C555.5 309.2 555.7 300.6 553.7 295.2C551.7 289.8 547.0 286.2 544.3 281.7C541.6 277.2 538.6 273.6 537.5 268.2C536.4 262.8 536.8 254.7 537.5 249.3C538.2 243.9 540.0 240.0 541.6 235.9C543.2 231.8 546.3 229.1 547.0 225.0C547.7 220.9 545.9 215.8 545.6 211.6C545.4 207.4 545.4 205.0 545.5 200.0C545.6 195.0 545.7 187.0 546.2 181.6C546.7 176.2 547.4 172.4 548.5 167.8C549.6 163.2 551.2 158.6 553.1 154.0C555.0 149.4 557.3 144.6 560.0 140.0C562.7 135.4 566.6 130.8 569.3 126.2C572.0 121.6 573.7 116.3 576.2 112.3C578.7 108.3 582.8 104.7 584.3 102.0C585.8 99.3 584.5 97.8 585.0 96.0Z" fill="none" stroke="#e0a060" stroke-width="1.9"/>
<!-- 3D origin cursor -->
<g transform="translate(586 382.5)">
 <circle r="6.8" fill="none" stroke="#f4e4e8" stroke-width="2.2"/>
 <circle r="6.8" fill="none" stroke="#d3a0aa" stroke-width="2.2" stroke-dasharray="3.56 3.56" opacity="0.85"/>
 <path d="M0 -13V-8M0 8V13M-13 0H-8M8 0H13" stroke="#262626" stroke-width="1.1"/>
 <circle r="1.8" fill="#c8b080"/>
</g>
</svg>
<div class="a" style="left:0;top:0;width:800px;height:17px;background:#ffffff"></div>
<svg width="14" height="17" viewBox="0 0 14 17" style="left:0px;top:0px;"><circle cx="3.5" cy="8.6" r="4.3" fill="#d9b46e"/><circle cx="3.6" cy="8.7" r="2.5" fill="#f3e4c4"/><circle cx="3.6" cy="8.7" r="1.1" fill="#3a2c14"/></svg>
<div class="t " style="left:12.5px;top:1.5px;color:#111111;font-size:9.5px;letter-spacing:-0.55px;">Blender</div>
<div class="a" style="left:0;top:17px;width:800px;height:19px;background:#1d1d1d"></div>
<svg width="20" height="20" viewBox="0 0 20 20" style="left:0px;top:17px;"><circle cx="9.3" cy="10.8" r="3.6" fill="none" stroke="#ececec" stroke-width="2"/><circle cx="9.3" cy="10.9" r="1.3" fill="#f4f4f4"/><path d="M8.6 5.6L9.6 7.2L3.2 7.6" stroke="#ececec" stroke-width="1.9" fill="none" stroke-linecap="round" stroke-linejoin="round"/><path d="M6.2 9.6L2.2 12.4" stroke="#ececec" stroke-width="2" stroke-linecap="round"/></svg>
<div class="a" style="left:16px;top:19px;width:24px;height:15px;background:#4265a3;border-radius:2px"></div>
<div class="t " style="left:21.5px;top:19.8px;color:#e4e4e4;font-size:9.2px;letter-spacing:-0.4px;">File</div>
<div class="t " style="left:46px;top:19.8px;color:#e4e4e4;font-size:9.2px;letter-spacing:-0.4px;">Edit</div>
<div class="t " style="left:71.5px;top:19.8px;color:#e4e4e4;font-size:9.2px;letter-spacing:-0.4px;">Render</div>
<div class="t " style="left:108px;top:19.8px;color:#e4e4e4;font-size:9.2px;letter-spacing:-0.4px;">Window</div>
<div class="t " style="left:150px;top:19.8px;color:#e4e4e4;font-size:9.2px;letter-spacing:-0.4px;">Help</div>
<div class="a" style="left:184px;top:21px;width:40px;height:15px;background:#2f2f2f;border-radius:3px 3px 0 0"></div>
<div class="t " style="left:191px;top:21.8px;color:#e8e8e8;">Layout</div>
<div class="t " style="left:232px;top:21.8px;color:#b4b4b4;">Modeling</div>
<div class="t " style="left:280px;top:21.8px;color:#b4b4b4;">Sculpting</div>
<div class="t " style="left:329px;top:21.8px;color:#b4b4b4;">UV Editing</div>
<div class="t " style="left:383px;top:21.8px;color:#b4b4b4;">Texture Paint</div>
<div class="t " style="left:448px;top:21.8px;color:#b4b4b4;">Shading</div>
<div class="t " style="left:491px;top:21.8px;color:#b4b4b4;">Animation</div>
<div class="t " style="left:544px;top:21.8px;color:#b4b4b4;">Rendering</div>
<div class="t " style="left:596px;top:21.8px;color:#b4b4b4;">Compositing</div>
<div class="t " style="left:658px;top:21.8px;color:#b4b4b4;">Geometry Nodes</div>
<div class="t " style="left:735px;top:21.8px;color:#b4b4b4;">Scripting</div>
<svg width="10" height="10" viewBox="0 0 10 10" style="left:779px;top:23px;"><path d="M5 0.5v9M0.5 5h9" stroke="#c8c8c8" stroke-width="1"/></svg>
<div class="a" style="left:0;top:36px;width:800px;height:60px;background:linear-gradient(#232323 0px,#292929 3px,#2e2e2e 20px,#333333 40px,rgba(55,55,55,0) 60px)"></div>
<svg width="13" height="13" viewBox="0 0 13 13" style="left:4px;top:40px;"><circle cx="9" cy="4" r="3" fill="#d8d8d8"/><path d="M1 9h11M1 12h11M3 7v6M10 7v6" stroke="#bdbdbd" stroke-width="0.9" stroke-dasharray="1.5 1"/></svg>
<div class="t " style="left:149px;top:39.2px;color:#dcdcdc;">Select</div>
<div class="t " style="left:184px;top:39.2px;color:#dcdcdc;">Add</div>
<div class="t " style="left:209px;top:39.2px;color:#dcdcdc;">Object</div>
<div class="a" style="left:493px;top:39px;width:60px;height:14px;background:#252525;border-radius:3px"></div>
<svg width="13" height="12" viewBox="0 0 13 12" style="left:495px;top:40px;"><path d="M2 1v9h9" stroke="#d0d0d0" stroke-width="1.1" fill="none"/><path d="M2 10L10 2" stroke="#d0d0d0" stroke-width="0.8" stroke-dasharray="1.3 1"/><circle cx="2" cy="1.5" r="1.2" fill="#d0d0d0"/><circle cx="11" cy="10" r="1.2" fill="#d0d0d0"/></svg>
<div class="t " style="left:512px;top:39.2px;color:#dcdcdc;">Global</div>
<svg width="7" height="5" viewBox="0 0 7 5" style="left:544px;top:44px;"><path d="M1 1l2.5 2.5L6 1" stroke="#c8c8c8" stroke-width="1.1" fill="none"/></svg>
<svg width="12" height="12" viewBox="0 0 12 12" style="left:559px;top:40px;"><g stroke="#d0d0d0" stroke-width="1.2" fill="none"><rect x="5.2" y="0.8" width="4.2" height="6.5" rx="2.1" transform="rotate(45 7.3 4)"/><rect x="1.6" y="4.6" width="4.2" height="6.5" rx="2.1" transform="rotate(45 3.7 7.9)"/></g></svg>
<svg width="7" height="5" viewBox="0 0 7 5" style="left:571px;top:44px;"><path d="M1 1l2.5 2.5L6 1" stroke="#c8c8c8" stroke-width="1.1" fill="none"/></svg>
<div class="a" style="left:583px;top:39.5px;width:14.5px;height:13.5px;background:#3a3a3a;border-radius:3px"></div>
<svg width="11" height="11" viewBox="0 0 11 11" style="left:585px;top:41px;"><path d="M2 8a4 4 0 1 1 7 -1" stroke="#8a8a8a" stroke-width="1.6" fill="none"/><path d="M3 5l4 3" stroke="#777" stroke-width="1"/></svg>
<svg width="14" height="14" viewBox="0 0 14 14" style="left:599px;top:39px;"><rect x="7.5" y="1" width="4" height="4" fill="#efefef"/><path d="M1 9v4M13 9v4M1 11h12M5 10v2M9 10v2" stroke="#d0d0d0" stroke-width="0.9"/></svg>
<svg width="7" height="5" viewBox="0 0 7 5" style="left:613px;top:45px;"><path d="M1 1l2.5 2.5L6 1" stroke="#c8c8c8" stroke-width="1.1" fill="none"/></svg>
<div class="a" style="left:626px;top:39.5px;width:14px;height:13.5px;background:#3a3a3a;border-radius:3px"></div>
<svg width="14" height="13.5" viewBox="0 0 14 13.5" style="left:626px;top:39.5px;"><circle cx="7" cy="6.8" r="2" fill="#c9c9c9"/><circle cx="7" cy="6.8" r="4.5" fill="none" stroke="#555" stroke-width="0.8"/></svg>
<svg width="14" height="13" viewBox="0 0 14 13" style="left:642px;top:40px;"><path d="M1 12C4 12 5 1 7 1S10 12 13 12" stroke="#b4b4b4" stroke-width="1.1" fill="none"/></svg>
<svg width="8" height="10" viewBox="0 0 8 10" style="left:657px;top:41px;"><path d="M1 9C3 9 3.5 2 5 2S7 9 8 9" stroke="#555" stroke-width="1" fill="none"/></svg>
<div class="a" style="left:0;top:56px;width:17px;height:271px;background:#2b2b2b;border-radius:0 3px 3px 0"></div>
<div class="a" style="left:2px;top:81px;width:16px;height:26px;background:#4470b0;border-radius:3px"></div>
<svg width="14" height="16" viewBox="0 0 14 16" style="left:4px;top:86px;"><rect x="1.5" y="1.5" width="10" height="13" fill="none" stroke="#cfe0ff" stroke-width="1" stroke-dasharray="1.6 1.2"/><rect x="6" y="4" width="4" height="8" rx="1" fill="#f2f6ff"/></svg>
<svg width="16" height="20" viewBox="0 0 16 20" style="left:2px;top:110px;"><circle cx="10" cy="10" r="7" fill="none" stroke="#cfcfcf" stroke-width="1.2" stroke-dasharray="4 2"/><path d="M10 3v4M10 13v4M3 10h4" stroke="#cfcfcf"/></svg>
<svg width="16" height="18" viewBox="0 0 16 18" style="left:2px;top:140px;"><path d="M10 2v14M3 9h14M10 2l-2 3M10 2l2 3M10 16l-2-3M10 16l2-3M3 9l3-2M3 9l3 2" stroke="#cfcfcf" stroke-width="1.1" fill="none"/></svg>
<svg width="16" height="18" viewBox="0 0 16 18" style="left:2px;top:166px;"><path d="M14 4A7 7 0 1 0 14 15" stroke="#cfcfcf" stroke-width="1.3" fill="none"/><path d="M4 9l5-3v6z" fill="#dfdfdf"/></svg>
<svg width="14" height="17" viewBox="0 0 14 17" style="left:3px;top:193px;"><rect x="7" y="8" width="7" height="8" fill="#e8e8e8"/><path d="M7 1h7v5" stroke="#bdbdbd" fill="none"/></svg>
<svg width="16" height="18" viewBox="0 0 16 18" style="left:2px;top:218px;"><circle cx="10" cy="9" r="7" fill="none" stroke="#cfcfcf" stroke-width="1.4"/><rect x="8" y="6" width="6" height="6" fill="#e6e6e6"/><path d="M10 1v3M10 14v3" stroke="#cfcfcf"/></svg>
<div class="a" style="left:2px;top:243.5px;width:14px;height:1px;background:#3a3a3a"></div>
<svg width="14" height="16" viewBox="0 0 14 16" style="left:3px;top:250px;"><path d="M13 2L4 11" stroke="#dcdcdc" stroke-width="3" stroke-linecap="round"/><path d="M3 12l-1 3 5-1" stroke="#cfcfcf" fill="none"/></svg>
<svg width="11" height="18" viewBox="0 0 11 18" style="left:5px;top:274px;"><rect x="3" y="1" width="6" height="16" fill="#d6d6d6"/><path d="M3 4h2M3 7h3M3 10h2M3 13h3" stroke="#666" stroke-width="0.8"/></svg>
<svg width="14" height="22" viewBox="0 0 14 22" style="left:5px;top:302px;"><path d="M4.5 1v7M1 4.5h7" stroke="#e0f0e0" stroke-width="1.8"/><path d="M5.5 19V10l4-3h4v12z" stroke="#8fa08f" fill="none" stroke-width="1"/></svg>
<div class="menu" style="left:16px;top:34px;width:138px;height:299.5px"></div>
<div class="sep" style="left:16px;top:114.5px;width:138px"></div>
<div class="sep" style="left:16px;top:166px;width:138px"></div>
<div class="sep" style="left:16px;top:217.5px;width:138px"></div>
<div class="sep" style="left:16px;top:254px;width:138px"></div>
<div class="sep" style="left:16px;top:290px;width:138px"></div>
<div class="sep" style="left:16px;top:312px;width:138px"></div>
<div class="a" style="left:18px;top:236px;width:134px;height:14px;background:#4672b3;border-radius:2.5px"></div>
<div class="t " style="left:40px;top:37.0px;">New</div>
<div class="t sc" style="right:654.5px;top:37.0px;letter-spacing:-0.3px;">Ctrl N</div>
<div class="arr" style="left:146px;top:41px;"></div>
<div class="ul" style="left:41.5px;top:49.0px;width:4.5px;"></div>
<div class="t " style="left:40px;top:52.0px;">Open...</div>
<div class="t sc" style="right:654.5px;top:52.0px;letter-spacing:-0.3px;">Ctrl O</div>
<div class="ul" style="left:41.5px;top:64.4px;width:4.5px;"></div>
<div class="t " style="left:40px;top:67.0px;">Open Recent</div>
<div class="t sc" style="right:654.5px;top:67.0px;letter-spacing:-0.3px;">Shift Ctrl O</div>
<div class="arr" style="left:146px;top:71px;"></div>
<div class="ul" style="left:63px;top:78.8px;width:5px;"></div>
<div class="t dis" style="left:40px;top:82.0px;">Revert</div>
<div class="ul" style="left:50px;top:94.4px;width:4.5px;background:#8a8a8a;"></div>
<div class="t " style="left:40px;top:97.0px;">Recover</div>
<div class="arr" style="left:146px;top:101px;"></div>
<div class="t " style="left:40px;top:118.0px;">Save</div>
<div class="t sc" style="right:654.5px;top:118.0px;letter-spacing:-0.3px;">Ctrl S</div>
<div class="ul" style="left:40.5px;top:131.0px;width:4.5px;"></div>
<div class="t " style="left:40px;top:133.0px;">Save As...</div>
<div class="t sc" style="right:654.5px;top:133.0px;letter-spacing:-0.3px;">Shift Ctrl S</div>
<div class="ul" style="left:60px;top:146.0px;width:5px;"></div>
<div class="t " style="left:40px;top:148.0px;">Save Copy...</div>
<div class="ul" style="left:60px;top:161.0px;width:5px;"></div>
<div class="t " style="left:40px;top:169.5px;">Link...</div>
<div class="ul" style="left:40.5px;top:182.6px;width:4.5px;"></div>
<div class="t " style="left:40px;top:184.5px;">Append...</div>
<div class="ul" style="left:46px;top:197.6px;width:4px;"></div>
<div class="t " style="left:40px;top:199.5px;">Data Previews</div>
<div class="arr" style="left:146px;top:203.5px;"></div>
<div class="ul" style="left:41px;top:212.6px;width:5px;"></div>
<div class="t " style="left:40px;top:221.0px;">Import</div>
<div class="arr" style="left:146px;top:225px;"></div>
<div class="ul" style="left:40.5px;top:233.0px;width:4.0px;"></div>
<div class="t " style="left:40px;top:236.0px;color:#ffffff;">Export</div>
<div class="arr" style="left:146px;top:240px;border-left-color:#e6eeff;"></div>
<div class="ul" style="left:40.5px;top:248.0px;width:4.0px;background:#e8eeff;"></div>
<div class="t " style="left:40px;top:257.5px;">External Data</div>
<div class="arr" style="left:146px;top:261.5px;"></div>
<div class="ul" style="left:45px;top:269.0px;width:5px;"></div>
<div class="t " style="left:40px;top:272.5px;">Clean Up</div>
<div class="arr" style="left:146px;top:276.5px;"></div>
<div class="ul" style="left:64px;top:284.8px;width:5px;"></div>
<div class="t " style="left:40px;top:294.0px;">Defaults</div>
<div class="arr" style="left:146px;top:298px;"></div>
<div class="ul" style="left:50px;top:306.4px;width:4px;"></div>
<div class="t " style="left:40px;top:316.0px;">Quit</div>
<div class="t sc" style="right:654.5px;top:316.0px;letter-spacing:-0.3px;">Ctrl Q</div>
<div class="ul" style="left:41px;top:328.0px;width:4px;"></div>
<svg width="13" height="12" viewBox="0 0 13 12" style="left:23px;top:39px;"><path d="M1.5 5.5L5 1.8H7M1.5 5.5V10.5H8.5V7" stroke="#d6d6d6" stroke-width="1" fill="none"/><circle cx="9.3" cy="3.3" r="2.6" fill="none" stroke="#d6d6d6" stroke-width="1.1"/><path d="M7.8 3.3h3M9.3 1.8v3" stroke="#d6d6d6" stroke-width="0.9"/></svg>
<svg width="12" height="11" viewBox="0 0 12 11" style="left:23px;top:53px;"><path d="M1 1.5h3.5l1 1.5H11V10H1z" fill="#e2e2e2"/><path d="M1 4h10" stroke="#555" stroke-width="0.7"/></svg>
<svg width="12" height="13" viewBox="0 0 12 13" style="left:23px;top:119px;"><path d="M4 1.5H11V11.5H1.5V4z" stroke="#d6d6d6" stroke-width="1.1" fill="none"/><path d="M5 9L8.5 5.5M6 5.3h2.8v2.8" stroke="#d6d6d6" stroke-width="1" fill="none"/></svg>
<svg width="12" height="13" viewBox="0 0 12 13" style="left:23px;top:170px;"><g stroke="#d6d6d6" stroke-width="1.1" fill="none"><rect x="5.6" y="0.6" width="4.3" height="7" rx="2.15" transform="rotate(45 7.75 4.1)"/><rect x="2" y="5" width="4.3" height="7" rx="2.15" transform="rotate(45 4.15 8.5)"/></g></svg>
<svg width="12" height="12" viewBox="0 0 12 12" style="left:23px;top:185px;"><path d="M8.5 1.5L2 8a2 2 0 0 0 3 3L10.5 5.5a1.3 1.3 0 0 0-2-2L4 8" stroke="#d6d6d6" stroke-width="1" fill="none" transform="rotate(0)"/></svg>
<svg width="12" height="13" viewBox="0 0 12 13" style="left:23px;top:221px;"><path d="M5.5 1v8M3 6.5l2.5 2.5L8 6.5" stroke="#d6d6d6" stroke-width="1.1" fill="none"/><path d="M1 9v2.5h9.5V9" stroke="#d6d6d6" stroke-width="1" fill="none"/></svg>
<svg width="12" height="13" viewBox="0 0 12 13" style="left:23px;top:236.5px;"><path d="M5.5 10V2M3 4.5l2.5-2.5L8 4.5" stroke="#e8eeff" stroke-width="1.1" fill="none"/><path d="M1 8.5v2.5h9.5V8.5" stroke="#e8eeff" stroke-width="1" fill="none"/></svg>
<svg width="14" height="14" viewBox="0 0 14 14" style="left:22px;top:316px;"><path d="M4 3.5A5 5 0 1 0 10 3.5" stroke="#d6d6d6" stroke-width="1.1" fill="none"/><path d="M7 1.5v5" stroke="#d6d6d6" stroke-width="1.1"/></svg>
<div class="menu" style="left:154px;top:232px;width:221px;height:198px"></div>
<div class="a" style="left:157px;top:399.5px;width:215px;height:13px;background:#4470b0;border-radius:3px"></div>
<div class="t " style="left:179px;top:234.5px;">Collada (.dae)</div>
<div class="ul" style="left:180px;top:247.8px;width:4px;"></div>
<div class="t " style="left:179px;top:249.4px;">Alembic (.abc)</div>
<div class="ul" style="left:180px;top:262.7px;width:4px;"></div>
<div class="t " style="left:179px;top:264.3px;">Universal Scene Description (.usd, .usdc, .usda)</div>
<div class="ul" style="left:180px;top:277.6px;width:4px;"></div>
<div class="t " style="left:179px;top:279.2px;">Grease Pencil as SVG</div>
<div class="ul" style="left:180px;top:292.5px;width:4px;"></div>
<div class="t " style="left:179px;top:294.1px;">Grease Pencil as PDF</div>
<div class="ul" style="left:208.5px;top:307.4px;width:4.0px;"></div>
<div class="t " style="left:179px;top:309.0px;">Wavefront (.obj) (experimental)</div>
<div class="ul" style="left:181px;top:322.3px;width:4.5px;"></div>
<div class="t dis" style="left:179px;top:323.9px;">Motion Capture (.bvh)</div>
<div class="ul" style="left:180px;top:337.2px;width:4px;background:#8a8a8a;"></div>
<div class="t " style="left:179px;top:338.8px;">Stanford (.ply)</div>
<div class="ul" style="left:180px;top:352.1px;width:4px;"></div>
<div class="t " style="left:179px;top:353.7px;">Stl (.stl)</div>
<div class="ul" style="left:183px;top:367.0px;width:4px;"></div>
<div class="t " style="left:179px;top:368.6px;">FBX (.fbx)</div>
<div class="ul" style="left:180px;top:381.9px;width:4px;"></div>
<div class="t " style="left:179px;top:383.5px;">glTF 2.0 (.glb/.gltf)</div>
<div class="ul" style="left:180px;top:396.8px;width:4px;"></div>
<div class="t " style="left:179px;top:398.4px;color:#ffffff;">Wavefront (.obj)</div>
<div class="ul" style="left:205px;top:411.7px;width:5px;background:#e8eeff;"></div>
<div class="t " style="left:179px;top:413.3px;">X3D Extensible 3D (.x3d)</div>
<div class="ul" style="left:180px;top:426.6px;width:4px;"></div>
<div class="a" style="left:319.5px;top:422.5px;width:118.5px;height:22.5px;background:#1c1c1c;border-radius:3px"></div>
<div class="t " style="left:329px;top:426.0px;color:#dedede;letter-spacing:-0.4px;">Save a Wavefront OBJ File.</div>
</body></html>
